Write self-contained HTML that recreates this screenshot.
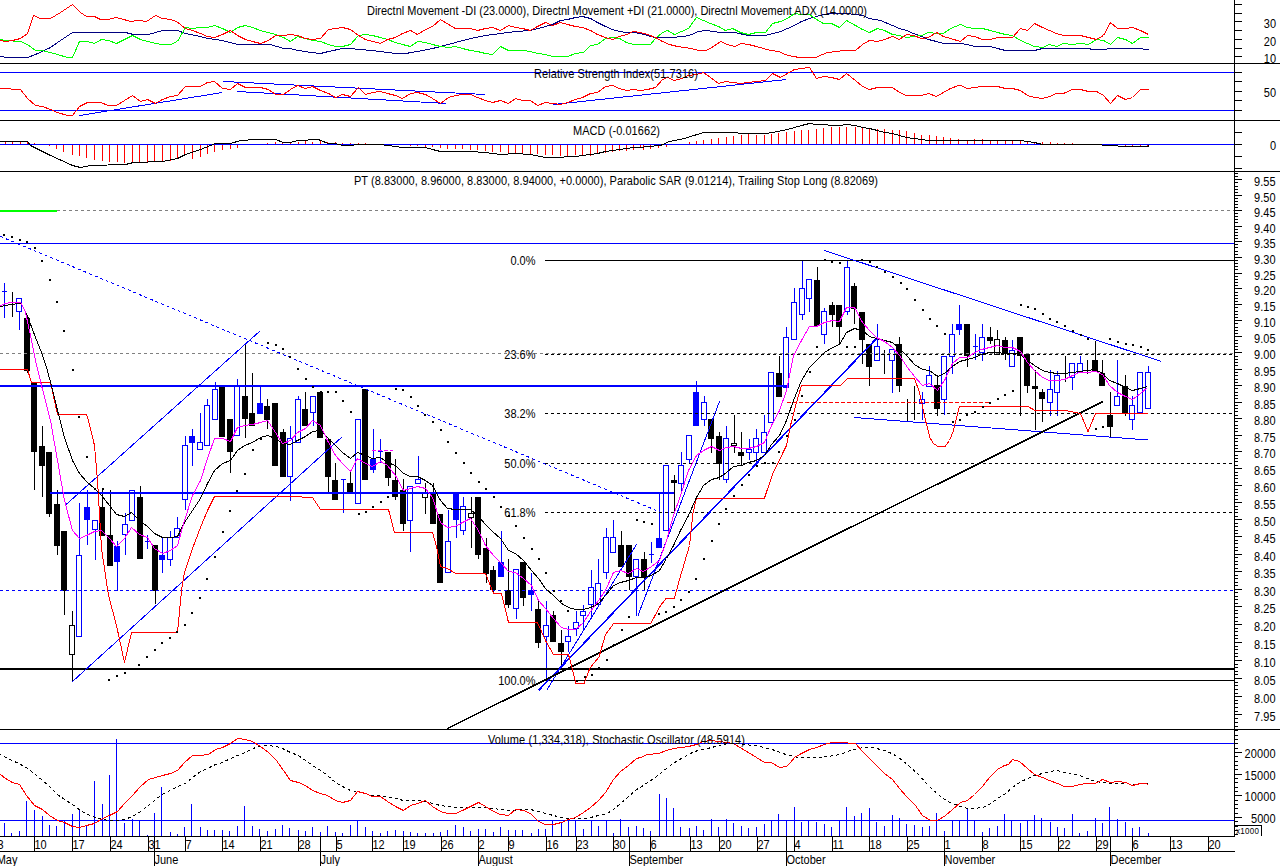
<!DOCTYPE html>
<html><head><meta charset="utf-8"><title>PT chart</title>
<style>
html,body{margin:0;padding:0;background:#fff;overflow:hidden}
svg{display:block}
text{font-family:"Liberation Sans",sans-serif;fill:#000}
</style></head><body>
<svg width="1280" height="866" viewBox="0 0 1280 866" shape-rendering="crispEdges" text-rendering="optimizeSpeed">
<rect width="1280" height="866" fill="#fff"/>
<rect x="0" y="63" width="1280" height="1" fill="#000"/>
<rect x="0" y="120" width="1280" height="1" fill="#000"/>
<rect x="0" y="171" width="1280" height="1" fill="#000"/>
<rect x="0" y="729" width="1280" height="1" fill="#000"/>
<rect x="0" y="836" width="1234" height="1" fill="#000"/>
<rect x="0" y="851" width="1235" height="1" fill="#000"/>
<rect x="1234" y="0" width="1" height="837" fill="#000"/>
<polyline points="-1.5,56.5 0.5,56.5 7.5,57.5 27.5,57.5 35.5,54.5 50.5,47.5 60.5,40.5 72.5,32.5 125.5,32.5 133.5,34.5 148.5,34.5 162.5,30.5 177.5,30.5 185.5,33.5 200.5,36.5 207.5,38.5 215.5,39.5 222.5,40.5 237.5,44.5 270.5,44.5 283.5,48.5 290.5,48.5 297.5,50.5 305.5,51.5 310.5,52.5 320.5,53.5 328.5,51.5 342.5,48.5 350.5,48.5 358.5,49.5 372.5,50.5 387.5,52.5 395.5,53.5 405.5,53.5 417.5,51.5 432.5,48.5 440.5,46.5 455.5,42.5 470.5,38.5 485.5,35.5 500.5,33.5 515.5,31.5 530.5,30.5 545.5,26.5 552.5,24.5 560.5,20.5 567.5,19.5 575.5,17.5 582.5,16.5 590.5,18.5 597.5,22.5 605.5,26.5 612.5,29.5 619.5,31.5 626.5,32.5 633.5,32.5 640.5,33.5 647.5,35.5 655.5,37.5 670.5,37.5 684.5,36.5 691.5,34.5 698.5,31.5 706.5,30.5 713.5,31.5 720.5,32.5 734.5,32.5 748.5,35.5 765.5,35.5 780.5,31.5 794.5,25.5 801.5,21.5 809.5,18.5 816.5,16.5 823.5,14.5 831.5,13.5 839.5,13.5 846.5,13.5 862.5,15.5 869.5,18.5 880.5,20.5 892.5,25.5 899.5,28.5 906.5,30.5 913.5,33.5 921.5,36.5 928.5,39.5 936.5,41.5 943.5,43.5 950.5,43.5 960.5,43.5 967.5,44.5 974.5,46.5 990.5,46.5 997.5,48.5 1005.5,50.5 1034.5,50.5 1042.5,48.5 1088.5,48.5 1092.5,49.5 1103.5,49.5 1110.5,48.5 1140.5,48.5 1145.5,49.5 1148.5,49.5" fill="none" stroke="#000080" stroke-width="1"/>
<polyline points="-1.5,39.5 0.5,39.5 5.5,40.5 20.5,41.5 27.5,44.5 35.5,50.5 42.5,50.5 57.5,54.5 67.5,57.5 72.5,57.5 79.5,41.5 87.5,41.5 94.5,43.5 101.5,39.5 108.5,40.5 116.5,43.5 124.5,39.5 132.5,35.5 140.5,39.5 155.5,43.5 162.5,44.5 170.5,44.5 177.5,41.5 185.5,27.5 192.5,28.5 200.5,27.5 207.5,27.5 214.5,25.5 222.5,28.5 230.5,32.5 237.5,27.5 245.5,25.5 252.5,27.5 260.5,30.5 275.5,34.5 283.5,37.5 290.5,41.5 297.5,36.5 305.5,38.5 312.5,40.5 320.5,41.5 328.5,44.5 335.5,46.5 342.5,46.5 350.5,44.5 358.5,35.5 365.5,34.5 372.5,35.5 380.5,37.5 387.5,39.5 395.5,42.5 402.5,44.5 410.5,46.5 417.5,41.5 425.5,42.5 432.5,44.5 440.5,46.5 448.5,47.5 455.5,46.5 462.5,48.5 470.5,50.5 477.5,51.5 485.5,53.5 492.5,54.5 500.5,46.5 508.5,50.5 515.5,50.5 522.5,50.5 530.5,51.5 537.5,53.5 545.5,54.5 552.5,56.5 567.5,56.5 575.5,53.5 583.5,52.5 590.5,45.5 597.5,44.5 605.5,38.5 612.5,37.5 619.5,38.5 626.5,42.5 633.5,44.5 640.5,44.5 650.5,44.5 655.5,38.5 662.5,32.5 667.5,30.5 674.5,34.5 681.5,31.5 688.5,28.5 696.5,17.5 703.5,20.5 710.5,23.5 718.5,26.5 725.5,30.5 732.5,28.5 740.5,32.5 748.5,34.5 756.5,32.5 765.5,32.5 772.5,23.5 780.5,21.5 787.5,18.5 794.5,13.5 801.5,14.5 809.5,14.5 816.5,19.5 823.5,23.5 831.5,23.5 839.5,27.5 846.5,20.5 855.5,25.5 862.5,29.5 869.5,32.5 877.5,28.5 884.5,30.5 892.5,34.5 899.5,35.5 906.5,37.5 913.5,36.5 921.5,35.5 928.5,32.5 936.5,33.5 943.5,33.5 950.5,28.5 960.5,24.5 967.5,27.5 974.5,28.5 982.5,28.5 990.5,30.5 997.5,32.5 1005.5,34.5 1012.5,35.5 1020.5,40.5 1027.5,43.5 1034.5,46.5 1042.5,47.5 1049.5,44.5 1056.5,46.5 1063.5,43.5 1072.5,44.5 1080.5,43.5 1088.5,44.5 1096.5,39.5 1103.5,40.5 1110.5,44.5 1117.5,37.5 1125.5,39.5 1132.5,43.5 1140.5,37.5 1148.5,37.5" fill="none" stroke="#00ff00" stroke-width="1"/>
<polyline points="-1.5,40.5 0.5,40.5 5.5,41.5 12.5,40.5 20.5,38.5 27.5,33.5 33.5,15.5 40.5,18.5 50.5,18.5 60.5,12.5 72.5,4.5 80.5,12.5 86.5,16.5 94.5,16.5 100.5,19.5 108.5,19.5 115.5,17.5 120.5,18.5 130.5,21.5 138.5,20.5 146.5,21.5 155.5,15.5 162.5,18.5 170.5,19.5 176.5,21.5 185.5,28.5 192.5,30.5 200.5,33.5 207.5,36.5 214.5,37.5 222.5,34.5 230.5,30.5 237.5,35.5 245.5,39.5 252.5,41.5 260.5,43.5 268.5,40.5 275.5,35.5 283.5,35.5 290.5,34.5 297.5,35.5 305.5,38.5 312.5,39.5 320.5,38.5 328.5,29.5 342.5,27.5 350.5,29.5 358.5,35.5 365.5,39.5 380.5,43.5 387.5,39.5 395.5,37.5 402.5,33.5 410.5,30.5 417.5,34.5 425.5,29.5 432.5,26.5 440.5,19.5 448.5,24.5 455.5,28.5 462.5,28.5 470.5,28.5 477.5,30.5 485.5,28.5 492.5,27.5 500.5,30.5 508.5,25.5 515.5,27.5 522.5,28.5 530.5,30.5 537.5,26.5 545.5,22.5 552.5,25.5 560.5,22.5 567.5,24.5 575.5,26.5 582.5,27.5 590.5,30.5 597.5,34.5 605.5,37.5 612.5,39.5 619.5,36.5 626.5,34.5 633.5,31.5 640.5,32.5 647.5,34.5 655.5,37.5 662.5,41.5 669.5,44.5 677.5,46.5 684.5,47.5 691.5,48.5 698.5,50.5 706.5,50.5 713.5,46.5 720.5,41.5 727.5,44.5 734.5,46.5 741.5,43.5 748.5,44.5 756.5,46.5 763.5,48.5 770.5,50.5 778.5,51.5 785.5,54.5 792.5,56.5 800.5,57.5 815.5,57.5 822.5,54.5 827.5,52.5 836.5,51.5 843.5,50.5 855.5,50.5 862.5,44.5 869.5,40.5 877.5,41.5 884.5,39.5 892.5,36.5 899.5,39.5 906.5,34.5 913.5,35.5 921.5,38.5 928.5,37.5 936.5,32.5 943.5,36.5 950.5,38.5 960.5,41.5 967.5,35.5 974.5,36.5 982.5,39.5 990.5,39.5 997.5,37.5 1012.5,37.5 1020.5,28.5 1027.5,30.5 1034.5,23.5 1042.5,27.5 1049.5,30.5 1056.5,33.5 1063.5,35.5 1080.5,35.5 1088.5,37.5 1096.5,39.5 1103.5,35.5 1110.5,22.5 1117.5,28.5 1125.5,28.5 1132.5,27.5 1140.5,30.5 1148.5,34.5" fill="none" stroke="#ff0000" stroke-width="1"/>
<rect x="1234" y="4" width="8" height="1" fill="#000"/>
<rect x="1234" y="13" width="8" height="1" fill="#000"/>
<rect x="1234" y="21" width="8" height="1" fill="#000"/>
<rect x="1234" y="30" width="8" height="1" fill="#000"/>
<rect x="1234" y="39" width="8" height="1" fill="#000"/>
<rect x="1234" y="48" width="8" height="1" fill="#000"/>
<rect x="1234" y="56" width="8" height="1" fill="#000"/>
<text transform="translate(1276 27.5) scale(1 1.09)" text-anchor="end" font-size="11">30</text>
<text transform="translate(1276 45.5) scale(1 1.09)" text-anchor="end" font-size="11">20</text>
<text transform="translate(1276 62.5) scale(1 1.09)" text-anchor="end" font-size="11">10</text>
<rect x="0" y="72" width="1234" height="1" fill="#0000ff"/>
<rect x="0" y="110" width="1234" height="1" fill="#0000ff"/>
<line x1="79.5" y1="115.5" x2="222.5" y2="92.5" stroke="#0000ff" stroke-width="1"/>
<line x1="223.5" y1="81.5" x2="485.5" y2="94.5" stroke="#0000ff" stroke-width="1"/>
<line x1="237.5" y1="91.5" x2="446.5" y2="103.5" stroke="#0000ff" stroke-width="1"/>
<line x1="553.5" y1="104.5" x2="786.5" y2="79.5" stroke="#0000ff" stroke-width="1"/>
<polyline points="-1.5,88.5 0.5,88.5 20.5,89.5 27.5,98.5 35.5,105.5 42.5,106.5 50.5,109.5 57.5,112.5 67.5,115.5 72.5,115.5 79.5,106.5 87.5,102.5 100.5,102.5 108.5,105.5 116.5,105.5 124.5,100.5 132.5,95.5 140.5,101.5 147.5,99.5 155.5,103.5 162.5,99.5 170.5,96.5 177.5,95.5 185.5,86.5 200.5,86.5 207.5,82.5 214.5,81.5 222.5,88.5 230.5,89.5 237.5,83.5 245.5,87.5 260.5,87.5 268.5,89.5 275.5,94.5 283.5,94.5 290.5,89.5 297.5,85.5 305.5,88.5 312.5,86.5 320.5,90.5 328.5,93.5 335.5,97.5 342.5,94.5 350.5,96.5 358.5,87.5 365.5,94.5 372.5,92.5 380.5,91.5 387.5,93.5 395.5,95.5 402.5,98.5 410.5,93.5 417.5,92.5 425.5,94.5 432.5,98.5 440.5,103.5 448.5,97.5 455.5,95.5 462.5,94.5 470.5,94.5 477.5,97.5 485.5,100.5 492.5,102.5 500.5,100.5 508.5,103.5 515.5,98.5 522.5,100.5 530.5,100.5 537.5,105.5 545.5,102.5 552.5,103.5 560.5,104.5 567.5,102.5 575.5,99.5 582.5,97.5 590.5,93.5 597.5,92.5 605.5,86.5 612.5,85.5 619.5,88.5 626.5,90.5 633.5,89.5 640.5,90.5 647.5,89.5 655.5,87.5 662.5,79.5 667.5,77.5 674.5,80.5 681.5,78.5 688.5,75.5 696.5,74.5 703.5,72.5 710.5,77.5 718.5,83.5 725.5,81.5 732.5,82.5 740.5,83.5 748.5,82.5 756.5,81.5 765.5,80.5 772.5,73.5 780.5,77.5 787.5,73.5 794.5,69.5 801.5,68.5 809.5,67.5 816.5,78.5 823.5,76.5 831.5,77.5 839.5,79.5 846.5,73.5 855.5,80.5 862.5,86.5 869.5,89.5 877.5,87.5 892.5,87.5 899.5,92.5 906.5,95.5 921.5,95.5 928.5,93.5 936.5,96.5 943.5,92.5 950.5,88.5 958.5,85.5 960.5,85.5 967.5,88.5 974.5,87.5 982.5,86.5 997.5,86.5 1005.5,88.5 1012.5,88.5 1020.5,90.5 1027.5,95.5 1034.5,97.5 1042.5,98.5 1049.5,96.5 1056.5,93.5 1063.5,93.5 1072.5,89.5 1080.5,89.5 1088.5,91.5 1096.5,91.5 1103.5,95.5 1110.5,103.5 1117.5,95.5 1125.5,99.5 1132.5,97.5 1140.5,89.5 1148.5,89.5" fill="none" stroke="#ff0000" stroke-width="1"/>
<rect x="1234" y="72" width="8" height="1" fill="#000"/>
<rect x="1234" y="81" width="8" height="1" fill="#000"/>
<rect x="1234" y="91" width="8" height="1" fill="#000"/>
<rect x="1234" y="100" width="8" height="1" fill="#000"/>
<rect x="1234" y="110" width="8" height="1" fill="#000"/>
<text transform="translate(1276 97) scale(1 1.09)" text-anchor="end" font-size="11">50</text>
<rect x="5" y="141" width="1" height="3" fill="#ff0000"/>
<rect x="12" y="141" width="1" height="3" fill="#ff0000"/>
<rect x="20" y="142" width="1" height="2" fill="#ff0000"/>
<rect x="27" y="142" width="1" height="2" fill="#ff0000"/>
<rect x="34" y="143" width="1" height="1" fill="#ff0000"/>
<rect x="49" y="145" width="1" height="1" fill="#ff0000"/>
<rect x="56" y="145" width="1" height="4" fill="#ff0000"/>
<rect x="63" y="145" width="1" height="7" fill="#ff0000"/>
<rect x="72" y="145" width="1" height="10" fill="#ff0000"/>
<rect x="79" y="145" width="1" height="11" fill="#ff0000"/>
<rect x="86" y="145" width="1" height="13" fill="#ff0000"/>
<rect x="94" y="145" width="1" height="15" fill="#ff0000"/>
<rect x="102" y="145" width="1" height="16" fill="#ff0000"/>
<rect x="109" y="145" width="1" height="17" fill="#ff0000"/>
<rect x="117" y="145" width="1" height="17" fill="#ff0000"/>
<rect x="124" y="145" width="1" height="18" fill="#ff0000"/>
<rect x="132" y="145" width="1" height="18" fill="#ff0000"/>
<rect x="139" y="145" width="1" height="17" fill="#ff0000"/>
<rect x="147" y="145" width="1" height="17" fill="#ff0000"/>
<rect x="154" y="145" width="1" height="17" fill="#ff0000"/>
<rect x="162" y="145" width="1" height="16" fill="#ff0000"/>
<rect x="170" y="145" width="1" height="16" fill="#ff0000"/>
<rect x="177" y="145" width="1" height="14" fill="#ff0000"/>
<rect x="184" y="145" width="1" height="11" fill="#ff0000"/>
<rect x="192" y="145" width="1" height="14" fill="#ff0000"/>
<rect x="200" y="145" width="1" height="12" fill="#ff0000"/>
<rect x="207" y="145" width="1" height="9" fill="#ff0000"/>
<rect x="214" y="145" width="1" height="7" fill="#ff0000"/>
<rect x="222" y="145" width="1" height="5" fill="#ff0000"/>
<rect x="230" y="145" width="1" height="4" fill="#ff0000"/>
<rect x="237" y="145" width="1" height="3" fill="#ff0000"/>
<rect x="267" y="143" width="1" height="1" fill="#ff0000"/>
<rect x="275" y="142" width="1" height="2" fill="#ff0000"/>
<rect x="282" y="143" width="1" height="1" fill="#ff0000"/>
<rect x="290" y="142" width="1" height="2" fill="#ff0000"/>
<rect x="298" y="142" width="1" height="2" fill="#ff0000"/>
<rect x="305" y="141" width="1" height="3" fill="#ff0000"/>
<rect x="312" y="142" width="1" height="2" fill="#ff0000"/>
<rect x="320" y="141" width="1" height="3" fill="#ff0000"/>
<rect x="327" y="142" width="1" height="2" fill="#ff0000"/>
<rect x="335" y="142" width="1" height="2" fill="#ff0000"/>
<rect x="342" y="143" width="1" height="1" fill="#ff0000"/>
<rect x="350" y="143" width="1" height="1" fill="#ff0000"/>
<rect x="358" y="143" width="1" height="1" fill="#ff0000"/>
<rect x="365" y="143" width="1" height="1" fill="#ff0000"/>
<rect x="410" y="145" width="1" height="1" fill="#ff0000"/>
<rect x="417" y="145" width="1" height="1" fill="#ff0000"/>
<rect x="425" y="145" width="1" height="2" fill="#ff0000"/>
<rect x="432" y="145" width="1" height="2" fill="#ff0000"/>
<rect x="440" y="145" width="1" height="3" fill="#ff0000"/>
<rect x="447" y="145" width="1" height="4" fill="#ff0000"/>
<rect x="455" y="145" width="1" height="4" fill="#ff0000"/>
<rect x="462" y="145" width="1" height="4" fill="#ff0000"/>
<rect x="470" y="145" width="1" height="5" fill="#ff0000"/>
<rect x="477" y="145" width="1" height="5" fill="#ff0000"/>
<rect x="485" y="145" width="1" height="6" fill="#ff0000"/>
<rect x="492" y="145" width="1" height="7" fill="#ff0000"/>
<rect x="500" y="145" width="1" height="7" fill="#ff0000"/>
<rect x="508" y="145" width="1" height="8" fill="#ff0000"/>
<rect x="515" y="145" width="1" height="8" fill="#ff0000"/>
<rect x="522" y="145" width="1" height="8" fill="#ff0000"/>
<rect x="530" y="145" width="1" height="9" fill="#ff0000"/>
<rect x="537" y="145" width="1" height="9" fill="#ff0000"/>
<rect x="545" y="145" width="1" height="10" fill="#ff0000"/>
<rect x="552" y="145" width="1" height="10" fill="#ff0000"/>
<rect x="560" y="145" width="1" height="11" fill="#ff0000"/>
<rect x="567" y="145" width="1" height="11" fill="#ff0000"/>
<rect x="575" y="145" width="1" height="10" fill="#ff0000"/>
<rect x="582" y="145" width="1" height="10" fill="#ff0000"/>
<rect x="590" y="145" width="1" height="11" fill="#ff0000"/>
<rect x="597" y="145" width="1" height="9" fill="#ff0000"/>
<rect x="605" y="145" width="1" height="8" fill="#ff0000"/>
<rect x="612" y="145" width="1" height="7" fill="#ff0000"/>
<rect x="619" y="145" width="1" height="6" fill="#ff0000"/>
<rect x="626" y="145" width="1" height="6" fill="#ff0000"/>
<rect x="633" y="145" width="1" height="5" fill="#ff0000"/>
<rect x="640" y="145" width="1" height="3" fill="#ff0000"/>
<rect x="643" y="145" width="1" height="5" fill="#ff0000"/>
<rect x="650" y="145" width="1" height="4" fill="#ff0000"/>
<rect x="658" y="145" width="1" height="3" fill="#ff0000"/>
<rect x="666" y="145" width="1" height="2" fill="#ff0000"/>
<rect x="689" y="142" width="1" height="2" fill="#ff0000"/>
<rect x="696" y="141" width="1" height="3" fill="#ff0000"/>
<rect x="703" y="140" width="1" height="4" fill="#ff0000"/>
<rect x="711" y="139" width="1" height="5" fill="#ff0000"/>
<rect x="718" y="138" width="1" height="6" fill="#ff0000"/>
<rect x="726" y="137" width="1" height="7" fill="#ff0000"/>
<rect x="733" y="136" width="1" height="8" fill="#ff0000"/>
<rect x="741" y="135" width="1" height="9" fill="#ff0000"/>
<rect x="748" y="134" width="1" height="10" fill="#ff0000"/>
<rect x="756" y="135" width="1" height="9" fill="#ff0000"/>
<rect x="764" y="135" width="1" height="9" fill="#ff0000"/>
<rect x="771" y="134" width="1" height="10" fill="#ff0000"/>
<rect x="778" y="133" width="1" height="11" fill="#ff0000"/>
<rect x="786" y="132" width="1" height="12" fill="#ff0000"/>
<rect x="794" y="131" width="1" height="13" fill="#ff0000"/>
<rect x="801" y="130" width="1" height="14" fill="#ff0000"/>
<rect x="808" y="130" width="1" height="14" fill="#ff0000"/>
<rect x="816" y="129" width="1" height="15" fill="#ff0000"/>
<rect x="823" y="128" width="1" height="16" fill="#ff0000"/>
<rect x="831" y="127" width="1" height="17" fill="#ff0000"/>
<rect x="839" y="127" width="1" height="17" fill="#ff0000"/>
<rect x="846" y="127" width="1" height="17" fill="#ff0000"/>
<rect x="855" y="127" width="1" height="17" fill="#ff0000"/>
<rect x="862" y="128" width="1" height="16" fill="#ff0000"/>
<rect x="869" y="128" width="1" height="16" fill="#ff0000"/>
<rect x="877" y="129" width="1" height="15" fill="#ff0000"/>
<rect x="884" y="129" width="1" height="15" fill="#ff0000"/>
<rect x="892" y="130" width="1" height="14" fill="#ff0000"/>
<rect x="899" y="130" width="1" height="14" fill="#ff0000"/>
<rect x="906" y="131" width="1" height="13" fill="#ff0000"/>
<rect x="914" y="133" width="1" height="11" fill="#ff0000"/>
<rect x="921" y="135" width="1" height="9" fill="#ff0000"/>
<rect x="929" y="135" width="1" height="9" fill="#ff0000"/>
<rect x="936" y="136" width="1" height="8" fill="#ff0000"/>
<rect x="943" y="137" width="1" height="7" fill="#ff0000"/>
<rect x="950" y="138" width="1" height="6" fill="#ff0000"/>
<rect x="958" y="139" width="1" height="5" fill="#ff0000"/>
<rect x="967" y="140" width="1" height="4" fill="#ff0000"/>
<rect x="974" y="139" width="1" height="5" fill="#ff0000"/>
<rect x="982" y="139" width="1" height="5" fill="#ff0000"/>
<rect x="990" y="140" width="1" height="4" fill="#ff0000"/>
<rect x="997" y="140" width="1" height="4" fill="#ff0000"/>
<rect x="1005" y="140" width="1" height="4" fill="#ff0000"/>
<rect x="1012" y="140" width="1" height="4" fill="#ff0000"/>
<rect x="1020" y="140" width="1" height="4" fill="#ff0000"/>
<rect x="1027" y="141" width="1" height="3" fill="#ff0000"/>
<rect x="1034" y="142" width="1" height="2" fill="#ff0000"/>
<rect x="1042" y="142" width="1" height="2" fill="#ff0000"/>
<rect x="1050" y="142" width="1" height="2" fill="#ff0000"/>
<rect x="1057" y="143" width="1" height="1" fill="#ff0000"/>
<rect x="1064" y="143" width="1" height="1" fill="#ff0000"/>
<rect x="1072" y="143" width="1" height="1" fill="#ff0000"/>
<rect x="1125" y="145" width="1" height="1" fill="#ff0000"/>
<rect x="1132" y="145" width="1" height="1" fill="#ff0000"/>
<rect x="1140" y="145" width="1" height="1" fill="#ff0000"/>
<rect x="1147" y="145" width="1" height="1" fill="#ff0000"/>
<rect x="0" y="144" width="1234" height="1" fill="#0000ff"/>
<polyline points="-1.5,141.5 0.5,141.5 27.5,141.5 30.5,145.5 50.5,155.5 72.5,165.5 80.5,167.5 90.5,165.5 125.5,164.5 133.5,162.5 162.5,161.5 177.5,158.5 185.5,154.5 200.5,149.5 215.5,143.5 230.5,143.5 240.5,140.5 255.5,139.5 275.5,139.5 283.5,142.5 290.5,142.5 297.5,140.5 305.5,140.5 310.5,139.5 318.5,139.5 320.5,140.5 328.5,143.5 335.5,143.5 342.5,145.5 350.5,145.5 358.5,144.5 380.5,144.5 395.5,146.5 402.5,147.5 425.5,147.5 432.5,149.5 440.5,151.5 470.5,151.5 485.5,152.5 500.5,154.5 515.5,153.5 530.5,154.5 545.5,157.5 552.5,157.5 560.5,157.5 567.5,156.5 575.5,156.5 582.5,155.5 590.5,154.5 597.5,153.5 605.5,151.5 612.5,150.5 619.5,149.5 626.5,148.5 633.5,147.5 640.5,147.5 647.5,146.5 660.5,145.5 662.5,144.5 669.5,141.5 684.5,138.5 703.5,132.5 735.5,132.5 740.5,133.5 765.5,133.5 772.5,132.5 787.5,129.5 801.5,125.5 809.5,123.5 816.5,124.5 839.5,125.5 846.5,124.5 855.5,125.5 862.5,127.5 869.5,128.5 877.5,130.5 884.5,132.5 892.5,133.5 899.5,135.5 906.5,137.5 913.5,138.5 921.5,139.5 928.5,140.5 936.5,140.5 943.5,140.5 950.5,140.5 960.5,140.5 967.5,140.5 1020.5,140.5 1027.5,141.5 1034.5,142.5 1042.5,144.5 1100.5,144.5 1103.5,145.5 1117.5,145.5 1118.5,146.5 1148.5,146.5 1148.5,144.5" fill="none" stroke="#000" stroke-width="1"/>
<rect x="1234" y="132" width="8" height="1" fill="#000"/>
<rect x="1234" y="144" width="8" height="1" fill="#000"/>
<rect x="1234" y="156" width="8" height="1" fill="#000"/>
<rect x="1234" y="168" width="8" height="1" fill="#000"/>
<text transform="translate(1276 150) scale(1 1.09)" text-anchor="end" font-size="11">0</text>
<rect x="1234" y="726" width="4" height="1" fill="#000"/>
<rect x="1234" y="722" width="4" height="1" fill="#000"/>
<rect x="1234" y="718" width="4" height="1" fill="#000"/>
<rect x="1234" y="714" width="8" height="1" fill="#000"/>
<text transform="translate(1275.5 721) scale(1 1.09)" text-anchor="end" font-size="11">7.95</text>
<rect x="1234" y="711" width="4" height="1" fill="#000"/>
<rect x="1234" y="707" width="4" height="1" fill="#000"/>
<rect x="1234" y="703" width="4" height="1" fill="#000"/>
<rect x="1234" y="700" width="4" height="1" fill="#000"/>
<rect x="1234" y="696" width="8" height="1" fill="#000"/>
<text transform="translate(1275.5 703) scale(1 1.09)" text-anchor="end" font-size="11">8.00</text>
<rect x="1234" y="693" width="4" height="1" fill="#000"/>
<rect x="1234" y="689" width="4" height="1" fill="#000"/>
<rect x="1234" y="685" width="4" height="1" fill="#000"/>
<rect x="1234" y="682" width="4" height="1" fill="#000"/>
<rect x="1234" y="678" width="8" height="1" fill="#000"/>
<text transform="translate(1275.5 685) scale(1 1.09)" text-anchor="end" font-size="11">8.05</text>
<rect x="1234" y="674" width="4" height="1" fill="#000"/>
<rect x="1234" y="671" width="4" height="1" fill="#000"/>
<rect x="1234" y="667" width="4" height="1" fill="#000"/>
<rect x="1234" y="664" width="4" height="1" fill="#000"/>
<rect x="1234" y="660" width="8" height="1" fill="#000"/>
<text transform="translate(1275.5 667) scale(1 1.09)" text-anchor="end" font-size="11">8.10</text>
<rect x="1234" y="656" width="4" height="1" fill="#000"/>
<rect x="1234" y="653" width="4" height="1" fill="#000"/>
<rect x="1234" y="649" width="4" height="1" fill="#000"/>
<rect x="1234" y="646" width="4" height="1" fill="#000"/>
<rect x="1234" y="642" width="8" height="1" fill="#000"/>
<text transform="translate(1275.5 649) scale(1 1.09)" text-anchor="end" font-size="11">8.15</text>
<rect x="1234" y="638" width="4" height="1" fill="#000"/>
<rect x="1234" y="635" width="4" height="1" fill="#000"/>
<rect x="1234" y="631" width="4" height="1" fill="#000"/>
<rect x="1234" y="628" width="4" height="1" fill="#000"/>
<rect x="1234" y="624" width="8" height="1" fill="#000"/>
<text transform="translate(1275.5 631) scale(1 1.09)" text-anchor="end" font-size="11">8.20</text>
<rect x="1234" y="621" width="4" height="1" fill="#000"/>
<rect x="1234" y="617" width="4" height="1" fill="#000"/>
<rect x="1234" y="613" width="4" height="1" fill="#000"/>
<rect x="1234" y="610" width="4" height="1" fill="#000"/>
<rect x="1234" y="606" width="8" height="1" fill="#000"/>
<text transform="translate(1275.5 613) scale(1 1.09)" text-anchor="end" font-size="11">8.25</text>
<rect x="1234" y="603" width="4" height="1" fill="#000"/>
<rect x="1234" y="599" width="4" height="1" fill="#000"/>
<rect x="1234" y="596" width="4" height="1" fill="#000"/>
<rect x="1234" y="592" width="4" height="1" fill="#000"/>
<rect x="1234" y="589" width="8" height="1" fill="#000"/>
<text transform="translate(1275.5 596) scale(1 1.09)" text-anchor="end" font-size="11">8.30</text>
<rect x="1234" y="585" width="4" height="1" fill="#000"/>
<rect x="1234" y="582" width="4" height="1" fill="#000"/>
<rect x="1234" y="578" width="4" height="1" fill="#000"/>
<rect x="1234" y="575" width="4" height="1" fill="#000"/>
<rect x="1234" y="571" width="8" height="1" fill="#000"/>
<text transform="translate(1275.5 578) scale(1 1.09)" text-anchor="end" font-size="11">8.35</text>
<rect x="1234" y="568" width="4" height="1" fill="#000"/>
<rect x="1234" y="564" width="4" height="1" fill="#000"/>
<rect x="1234" y="561" width="4" height="1" fill="#000"/>
<rect x="1234" y="557" width="4" height="1" fill="#000"/>
<rect x="1234" y="554" width="8" height="1" fill="#000"/>
<text transform="translate(1275.5 561) scale(1 1.09)" text-anchor="end" font-size="11">8.40</text>
<rect x="1234" y="550" width="4" height="1" fill="#000"/>
<rect x="1234" y="547" width="4" height="1" fill="#000"/>
<rect x="1234" y="543" width="4" height="1" fill="#000"/>
<rect x="1234" y="540" width="4" height="1" fill="#000"/>
<rect x="1234" y="536" width="8" height="1" fill="#000"/>
<text transform="translate(1275.5 543) scale(1 1.09)" text-anchor="end" font-size="11">8.45</text>
<rect x="1234" y="533" width="4" height="1" fill="#000"/>
<rect x="1234" y="530" width="4" height="1" fill="#000"/>
<rect x="1234" y="526" width="4" height="1" fill="#000"/>
<rect x="1234" y="523" width="4" height="1" fill="#000"/>
<rect x="1234" y="519" width="8" height="1" fill="#000"/>
<text transform="translate(1275.5 526) scale(1 1.09)" text-anchor="end" font-size="11">8.50</text>
<rect x="1234" y="516" width="4" height="1" fill="#000"/>
<rect x="1234" y="512" width="4" height="1" fill="#000"/>
<rect x="1234" y="509" width="4" height="1" fill="#000"/>
<rect x="1234" y="506" width="4" height="1" fill="#000"/>
<rect x="1234" y="502" width="8" height="1" fill="#000"/>
<text transform="translate(1275.5 509) scale(1 1.09)" text-anchor="end" font-size="11">8.55</text>
<rect x="1234" y="499" width="4" height="1" fill="#000"/>
<rect x="1234" y="495" width="4" height="1" fill="#000"/>
<rect x="1234" y="492" width="4" height="1" fill="#000"/>
<rect x="1234" y="489" width="4" height="1" fill="#000"/>
<rect x="1234" y="485" width="8" height="1" fill="#000"/>
<text transform="translate(1275.5 492) scale(1 1.09)" text-anchor="end" font-size="11">8.60</text>
<rect x="1234" y="482" width="4" height="1" fill="#000"/>
<rect x="1234" y="478" width="4" height="1" fill="#000"/>
<rect x="1234" y="475" width="4" height="1" fill="#000"/>
<rect x="1234" y="472" width="4" height="1" fill="#000"/>
<rect x="1234" y="468" width="8" height="1" fill="#000"/>
<text transform="translate(1275.5 475) scale(1 1.09)" text-anchor="end" font-size="11">8.65</text>
<rect x="1234" y="465" width="4" height="1" fill="#000"/>
<rect x="1234" y="461" width="4" height="1" fill="#000"/>
<rect x="1234" y="458" width="4" height="1" fill="#000"/>
<rect x="1234" y="455" width="4" height="1" fill="#000"/>
<rect x="1234" y="451" width="8" height="1" fill="#000"/>
<text transform="translate(1275.5 458) scale(1 1.09)" text-anchor="end" font-size="11">8.70</text>
<rect x="1234" y="448" width="4" height="1" fill="#000"/>
<rect x="1234" y="445" width="4" height="1" fill="#000"/>
<rect x="1234" y="441" width="4" height="1" fill="#000"/>
<rect x="1234" y="438" width="4" height="1" fill="#000"/>
<rect x="1234" y="435" width="8" height="1" fill="#000"/>
<text transform="translate(1275.5 442) scale(1 1.09)" text-anchor="end" font-size="11">8.75</text>
<rect x="1234" y="431" width="4" height="1" fill="#000"/>
<rect x="1234" y="428" width="4" height="1" fill="#000"/>
<rect x="1234" y="425" width="4" height="1" fill="#000"/>
<rect x="1234" y="421" width="4" height="1" fill="#000"/>
<rect x="1234" y="418" width="8" height="1" fill="#000"/>
<text transform="translate(1275.5 425) scale(1 1.09)" text-anchor="end" font-size="11">8.80</text>
<rect x="1234" y="415" width="4" height="1" fill="#000"/>
<rect x="1234" y="411" width="4" height="1" fill="#000"/>
<rect x="1234" y="408" width="4" height="1" fill="#000"/>
<rect x="1234" y="405" width="4" height="1" fill="#000"/>
<rect x="1234" y="402" width="8" height="1" fill="#000"/>
<text transform="translate(1275.5 409) scale(1 1.09)" text-anchor="end" font-size="11">8.85</text>
<rect x="1234" y="398" width="4" height="1" fill="#000"/>
<rect x="1234" y="395" width="4" height="1" fill="#000"/>
<rect x="1234" y="392" width="4" height="1" fill="#000"/>
<rect x="1234" y="388" width="4" height="1" fill="#000"/>
<rect x="1234" y="385" width="8" height="1" fill="#000"/>
<text transform="translate(1275.5 392) scale(1 1.09)" text-anchor="end" font-size="11">8.90</text>
<rect x="1234" y="382" width="4" height="1" fill="#000"/>
<rect x="1234" y="379" width="4" height="1" fill="#000"/>
<rect x="1234" y="375" width="4" height="1" fill="#000"/>
<rect x="1234" y="372" width="4" height="1" fill="#000"/>
<rect x="1234" y="369" width="8" height="1" fill="#000"/>
<text transform="translate(1275.5 376) scale(1 1.09)" text-anchor="end" font-size="11">8.95</text>
<rect x="1234" y="365" width="4" height="1" fill="#000"/>
<rect x="1234" y="362" width="4" height="1" fill="#000"/>
<rect x="1234" y="359" width="4" height="1" fill="#000"/>
<rect x="1234" y="356" width="4" height="1" fill="#000"/>
<rect x="1234" y="352" width="8" height="1" fill="#000"/>
<text transform="translate(1275.5 359) scale(1 1.09)" text-anchor="end" font-size="11">9.00</text>
<rect x="1234" y="349" width="4" height="1" fill="#000"/>
<rect x="1234" y="346" width="4" height="1" fill="#000"/>
<rect x="1234" y="343" width="4" height="1" fill="#000"/>
<rect x="1234" y="340" width="4" height="1" fill="#000"/>
<rect x="1234" y="336" width="8" height="1" fill="#000"/>
<text transform="translate(1275.5 343) scale(1 1.09)" text-anchor="end" font-size="11">9.05</text>
<rect x="1234" y="333" width="4" height="1" fill="#000"/>
<rect x="1234" y="330" width="4" height="1" fill="#000"/>
<rect x="1234" y="327" width="4" height="1" fill="#000"/>
<rect x="1234" y="323" width="4" height="1" fill="#000"/>
<rect x="1234" y="320" width="8" height="1" fill="#000"/>
<text transform="translate(1275.5 327) scale(1 1.09)" text-anchor="end" font-size="11">9.10</text>
<rect x="1234" y="317" width="4" height="1" fill="#000"/>
<rect x="1234" y="314" width="4" height="1" fill="#000"/>
<rect x="1234" y="311" width="4" height="1" fill="#000"/>
<rect x="1234" y="307" width="4" height="1" fill="#000"/>
<rect x="1234" y="304" width="8" height="1" fill="#000"/>
<text transform="translate(1275.5 311) scale(1 1.09)" text-anchor="end" font-size="11">9.15</text>
<rect x="1234" y="301" width="4" height="1" fill="#000"/>
<rect x="1234" y="298" width="4" height="1" fill="#000"/>
<rect x="1234" y="295" width="4" height="1" fill="#000"/>
<rect x="1234" y="292" width="4" height="1" fill="#000"/>
<rect x="1234" y="288" width="8" height="1" fill="#000"/>
<text transform="translate(1275.5 295) scale(1 1.09)" text-anchor="end" font-size="11">9.20</text>
<rect x="1234" y="285" width="4" height="1" fill="#000"/>
<rect x="1234" y="282" width="4" height="1" fill="#000"/>
<rect x="1234" y="279" width="4" height="1" fill="#000"/>
<rect x="1234" y="276" width="4" height="1" fill="#000"/>
<rect x="1234" y="273" width="8" height="1" fill="#000"/>
<text transform="translate(1275.5 280) scale(1 1.09)" text-anchor="end" font-size="11">9.25</text>
<rect x="1234" y="269" width="4" height="1" fill="#000"/>
<rect x="1234" y="266" width="4" height="1" fill="#000"/>
<rect x="1234" y="263" width="4" height="1" fill="#000"/>
<rect x="1234" y="260" width="4" height="1" fill="#000"/>
<rect x="1234" y="257" width="8" height="1" fill="#000"/>
<text transform="translate(1275.5 264) scale(1 1.09)" text-anchor="end" font-size="11">9.30</text>
<rect x="1234" y="254" width="4" height="1" fill="#000"/>
<rect x="1234" y="251" width="4" height="1" fill="#000"/>
<rect x="1234" y="247" width="4" height="1" fill="#000"/>
<rect x="1234" y="244" width="4" height="1" fill="#000"/>
<rect x="1234" y="241" width="8" height="1" fill="#000"/>
<text transform="translate(1275.5 248) scale(1 1.09)" text-anchor="end" font-size="11">9.35</text>
<rect x="1234" y="238" width="4" height="1" fill="#000"/>
<rect x="1234" y="235" width="4" height="1" fill="#000"/>
<rect x="1234" y="232" width="4" height="1" fill="#000"/>
<rect x="1234" y="229" width="4" height="1" fill="#000"/>
<rect x="1234" y="226" width="8" height="1" fill="#000"/>
<text transform="translate(1275.5 233) scale(1 1.09)" text-anchor="end" font-size="11">9.40</text>
<rect x="1234" y="222" width="4" height="1" fill="#000"/>
<rect x="1234" y="219" width="4" height="1" fill="#000"/>
<rect x="1234" y="216" width="4" height="1" fill="#000"/>
<rect x="1234" y="213" width="4" height="1" fill="#000"/>
<rect x="1234" y="210" width="8" height="1" fill="#000"/>
<text transform="translate(1275.5 217) scale(1 1.09)" text-anchor="end" font-size="11">9.45</text>
<rect x="1234" y="207" width="4" height="1" fill="#000"/>
<rect x="1234" y="204" width="4" height="1" fill="#000"/>
<rect x="1234" y="201" width="4" height="1" fill="#000"/>
<rect x="1234" y="198" width="4" height="1" fill="#000"/>
<rect x="1234" y="195" width="8" height="1" fill="#000"/>
<text transform="translate(1275.5 202) scale(1 1.09)" text-anchor="end" font-size="11">9.50</text>
<rect x="1234" y="192" width="4" height="1" fill="#000"/>
<rect x="1234" y="189" width="4" height="1" fill="#000"/>
<rect x="1234" y="186" width="4" height="1" fill="#000"/>
<rect x="1234" y="182" width="4" height="1" fill="#000"/>
<rect x="1234" y="179" width="8" height="1" fill="#000"/>
<text transform="translate(1275.5 186) scale(1 1.09)" text-anchor="end" font-size="11">9.55</text>
<rect x="1234" y="176" width="4" height="1" fill="#000"/>
<rect x="1234" y="173" width="4" height="1" fill="#000"/>
<rect x="4" y="283" width="1" height="35" fill="#0000ff"/>
<rect x="2" y="291" width="5" height="1" fill="#0000ff"/>
<rect x="12" y="292" width="1" height="25" fill="#000"/>
<rect x="19" y="312" width="1" height="18" fill="#0000ff"/>
<rect x="16.5" y="298.5" width="5" height="13" fill="none" stroke="#0000ff"/>
<rect x="27" y="318" width="1" height="55" fill="#000"/>
<rect x="24" y="318" width="6" height="53" fill="#000"/>
<rect x="34" y="383" width="1" height="107" fill="#000"/>
<rect x="31" y="383" width="6" height="69" fill="#000"/>
<rect x="42" y="426" width="1" height="71" fill="#000"/>
<rect x="39" y="446" width="6" height="20" fill="#000"/>
<rect x="49" y="452" width="1" height="65" fill="#000"/>
<rect x="46" y="452" width="6" height="62" fill="#000"/>
<rect x="57" y="490" width="1" height="65" fill="#000"/>
<rect x="54" y="504" width="6" height="42" fill="#000"/>
<rect x="64" y="531" width="1" height="84" fill="#000"/>
<rect x="61" y="531" width="6" height="60" fill="#000"/>
<rect x="72" y="611" width="1" height="14" fill="#000"/>
<rect x="72" y="655" width="1" height="27" fill="#000"/>
<rect x="69.5" y="625.5" width="5" height="29" fill="none" stroke="#000"/>
<rect x="79" y="503" width="1" height="52" fill="#0000ff"/>
<rect x="76.5" y="555.5" width="5" height="81" fill="none" stroke="#0000ff"/>
<rect x="87" y="490" width="1" height="55" fill="#0000ff"/>
<rect x="84" y="507" width="6" height="13" fill="#0000ff"/>
<rect x="95" y="530" width="1" height="30" fill="#0000ff"/>
<rect x="92.5" y="520.5" width="5" height="9" fill="none" stroke="#0000ff"/>
<rect x="102" y="490" width="1" height="46" fill="#000"/>
<rect x="99" y="507" width="6" height="29" fill="#000"/>
<rect x="110" y="490" width="1" height="76" fill="#000"/>
<rect x="107" y="535" width="6" height="31" fill="#000"/>
<rect x="117" y="541" width="1" height="50" fill="#0000ff"/>
<rect x="114" y="546" width="6" height="16" fill="#0000ff"/>
<rect x="125" y="513" width="1" height="11" fill="#0000ff"/>
<rect x="125" y="535" width="1" height="20" fill="#0000ff"/>
<rect x="122.5" y="524.5" width="5" height="10" fill="none" stroke="#0000ff"/>
<rect x="129.5" y="490.5" width="5" height="30" fill="none" stroke="#0000ff"/>
<rect x="140" y="486" width="1" height="73" fill="#000"/>
<rect x="137" y="497" width="6" height="62" fill="#000"/>
<rect x="147" y="535" width="1" height="14" fill="#0000ff"/>
<rect x="145" y="541" width="5" height="1" fill="#0000ff"/>
<rect x="155" y="545" width="1" height="59" fill="#000"/>
<rect x="152" y="545" width="6" height="46" fill="#000"/>
<rect x="162" y="538" width="1" height="35" fill="#0000ff"/>
<rect x="159" y="555" width="6" height="5" fill="#0000ff"/>
<rect x="170" y="531" width="1" height="6" fill="#0000ff"/>
<rect x="170" y="560" width="1" height="6" fill="#0000ff"/>
<rect x="167.5" y="537.5" width="5" height="22" fill="none" stroke="#0000ff"/>
<rect x="177" y="517" width="1" height="11" fill="#0000ff"/>
<rect x="174.5" y="528.5" width="5" height="9" fill="none" stroke="#0000ff"/>
<rect x="185" y="436" width="1" height="9" fill="#0000ff"/>
<rect x="185" y="500" width="1" height="10" fill="#0000ff"/>
<rect x="182.5" y="445.5" width="5" height="54" fill="none" stroke="#0000ff"/>
<rect x="192" y="429" width="1" height="37" fill="#0000ff"/>
<rect x="189" y="436" width="6" height="7" fill="#0000ff"/>
<rect x="200" y="413" width="1" height="29" fill="#0000ff"/>
<rect x="197.5" y="442.5" width="5" height="7" fill="none" stroke="#0000ff"/>
<rect x="207" y="399" width="1" height="6" fill="#0000ff"/>
<rect x="204.5" y="405.5" width="5" height="40" fill="none" stroke="#0000ff"/>
<rect x="215" y="382" width="1" height="7" fill="#0000ff"/>
<rect x="212.5" y="389.5" width="5" height="30" fill="none" stroke="#0000ff"/>
<rect x="222" y="386" width="1" height="51" fill="#000"/>
<rect x="219" y="386" width="6" height="51" fill="#000"/>
<rect x="230" y="419" width="1" height="54" fill="#000"/>
<rect x="227" y="419" width="6" height="33" fill="#000"/>
<rect x="237" y="379" width="1" height="7" fill="#0000ff"/>
<rect x="234.5" y="386.5" width="5" height="49" fill="none" stroke="#0000ff"/>
<rect x="245" y="343" width="1" height="95" fill="#000"/>
<rect x="242" y="396" width="6" height="23" fill="#000"/>
<rect x="252" y="373" width="1" height="53" fill="#000"/>
<rect x="249" y="413" width="6" height="13" fill="#000"/>
<rect x="260" y="387" width="1" height="27" fill="#0000ff"/>
<rect x="257" y="403" width="6" height="11" fill="#0000ff"/>
<rect x="267" y="399" width="1" height="30" fill="#000"/>
<rect x="264" y="406" width="6" height="14" fill="#000"/>
<rect x="275" y="403" width="1" height="63" fill="#000"/>
<rect x="272" y="403" width="6" height="63" fill="#000"/>
<rect x="283" y="429" width="1" height="48" fill="#000"/>
<rect x="280" y="432" width="6" height="45" fill="#000"/>
<rect x="290" y="426" width="1" height="12" fill="#0000ff"/>
<rect x="290" y="477" width="1" height="24" fill="#0000ff"/>
<rect x="287.5" y="438.5" width="5" height="38" fill="none" stroke="#0000ff"/>
<rect x="298" y="396" width="1" height="3" fill="#0000ff"/>
<rect x="295.5" y="399.5" width="5" height="43" fill="none" stroke="#0000ff"/>
<rect x="305" y="392" width="1" height="34" fill="#000"/>
<rect x="302" y="409" width="6" height="17" fill="#000"/>
<rect x="313" y="413" width="1" height="13" fill="#0000ff"/>
<rect x="310.5" y="396.5" width="5" height="16" fill="none" stroke="#0000ff"/>
<rect x="320" y="392" width="1" height="46" fill="#000"/>
<rect x="317" y="392" width="6" height="46" fill="#000"/>
<rect x="328" y="439" width="1" height="54" fill="#000"/>
<rect x="325" y="439" width="6" height="38" fill="#000"/>
<rect x="335" y="463" width="1" height="37" fill="#000"/>
<rect x="332" y="480" width="6" height="20" fill="#000"/>
<rect x="343" y="479" width="1" height="34" fill="#0000ff"/>
<rect x="341" y="479" width="5" height="1" fill="#0000ff"/>
<rect x="350" y="470" width="1" height="23" fill="#000"/>
<rect x="347" y="483" width="6" height="10" fill="#000"/>
<rect x="355.5" y="419.5" width="5" height="84" fill="none" stroke="#0000ff"/>
<rect x="365" y="389" width="1" height="91" fill="#000"/>
<rect x="362" y="389" width="6" height="91" fill="#000"/>
<rect x="373" y="429" width="1" height="44" fill="#0000ff"/>
<rect x="370" y="459" width="6" height="11" fill="#0000ff"/>
<rect x="380" y="439" width="1" height="24" fill="#0000ff"/>
<rect x="378" y="451" width="5" height="1" fill="#0000ff"/>
<rect x="388" y="452" width="1" height="34" fill="#000"/>
<rect x="385" y="452" width="6" height="26" fill="#000"/>
<rect x="395" y="459" width="1" height="41" fill="#000"/>
<rect x="392" y="480" width="6" height="17" fill="#000"/>
<rect x="403" y="479" width="1" height="52" fill="#000"/>
<rect x="400" y="490" width="6" height="34" fill="#000"/>
<rect x="410" y="521" width="1" height="31" fill="#0000ff"/>
<rect x="407.5" y="486.5" width="5" height="34" fill="none" stroke="#0000ff"/>
<rect x="418" y="456" width="1" height="23" fill="#0000ff"/>
<rect x="415.5" y="479.5" width="5" height="4" fill="none" stroke="#0000ff"/>
<rect x="425" y="483" width="1" height="10" fill="#000"/>
<rect x="425" y="498" width="1" height="16" fill="#000"/>
<rect x="422.5" y="493.5" width="5" height="4" fill="none" stroke="#000"/>
<rect x="433" y="483" width="1" height="41" fill="#000"/>
<rect x="430" y="493" width="6" height="31" fill="#000"/>
<rect x="440" y="514" width="1" height="69" fill="#000"/>
<rect x="437" y="514" width="6" height="69" fill="#000"/>
<rect x="448" y="510" width="1" height="31" fill="#0000ff"/>
<rect x="445.5" y="541.5" width="5" height="31" fill="none" stroke="#0000ff"/>
<rect x="456" y="493" width="1" height="45" fill="#0000ff"/>
<rect x="453" y="493" width="6" height="27" fill="#0000ff"/>
<rect x="463" y="497" width="1" height="9" fill="#0000ff"/>
<rect x="463" y="531" width="1" height="4" fill="#0000ff"/>
<rect x="460.5" y="506.5" width="5" height="24" fill="none" stroke="#0000ff"/>
<rect x="471" y="497" width="1" height="16" fill="#000"/>
<rect x="471" y="518" width="1" height="30" fill="#000"/>
<rect x="468.5" y="513.5" width="5" height="4" fill="none" stroke="#000"/>
<rect x="478" y="497" width="1" height="62" fill="#000"/>
<rect x="475" y="497" width="6" height="58" fill="#000"/>
<rect x="486" y="538" width="1" height="45" fill="#000"/>
<rect x="483" y="548" width="6" height="26" fill="#000"/>
<rect x="493" y="566" width="1" height="28" fill="#000"/>
<rect x="490" y="570" width="6" height="20" fill="#000"/>
<rect x="501" y="531" width="1" height="46" fill="#0000ff"/>
<rect x="498" y="562" width="6" height="15" fill="#0000ff"/>
<rect x="508" y="559" width="1" height="49" fill="#000"/>
<rect x="505" y="590" width="6" height="15" fill="#000"/>
<rect x="516" y="609" width="1" height="10" fill="#0000ff"/>
<rect x="513.5" y="569.5" width="5" height="39" fill="none" stroke="#0000ff"/>
<rect x="523" y="562" width="1" height="44" fill="#000"/>
<rect x="520" y="562" width="6" height="36" fill="#000"/>
<rect x="531" y="573" width="1" height="38" fill="#0000ff"/>
<rect x="528" y="590" width="6" height="5" fill="#0000ff"/>
<rect x="538" y="601" width="1" height="47" fill="#000"/>
<rect x="535" y="609" width="6" height="34" fill="#000"/>
<rect x="546" y="601" width="1" height="24" fill="#0000ff"/>
<rect x="546" y="637" width="1" height="45" fill="#0000ff"/>
<rect x="543.5" y="625.5" width="5" height="11" fill="none" stroke="#0000ff"/>
<rect x="553" y="611" width="1" height="31" fill="#000"/>
<rect x="550" y="615" width="6" height="27" fill="#000"/>
<rect x="561" y="630" width="1" height="35" fill="#000"/>
<rect x="558" y="643" width="6" height="9" fill="#000"/>
<rect x="568" y="626" width="1" height="10" fill="#0000ff"/>
<rect x="568" y="642" width="1" height="10" fill="#0000ff"/>
<rect x="565.5" y="636.5" width="5" height="5" fill="none" stroke="#0000ff"/>
<rect x="576" y="611" width="1" height="11" fill="#0000ff"/>
<rect x="576" y="629" width="1" height="7" fill="#0000ff"/>
<rect x="573.5" y="622.5" width="5" height="6" fill="none" stroke="#0000ff"/>
<rect x="583" y="605" width="1" height="6" fill="#0000ff"/>
<rect x="583" y="616" width="1" height="13" fill="#0000ff"/>
<rect x="580.5" y="611.5" width="5" height="4" fill="none" stroke="#0000ff"/>
<rect x="591" y="570" width="1" height="17" fill="#0000ff"/>
<rect x="591" y="605" width="1" height="14" fill="#0000ff"/>
<rect x="588.5" y="587.5" width="5" height="17" fill="none" stroke="#0000ff"/>
<rect x="598" y="559" width="1" height="24" fill="#0000ff"/>
<rect x="595.5" y="583.5" width="5" height="21" fill="none" stroke="#0000ff"/>
<rect x="606" y="528" width="1" height="9" fill="#0000ff"/>
<rect x="606" y="573" width="1" height="6" fill="#0000ff"/>
<rect x="603.5" y="537.5" width="5" height="35" fill="none" stroke="#0000ff"/>
<rect x="613" y="520" width="1" height="17" fill="#0000ff"/>
<rect x="610.5" y="537.5" width="5" height="15" fill="none" stroke="#0000ff"/>
<rect x="621" y="531" width="1" height="36" fill="#000"/>
<rect x="618" y="545" width="6" height="22" fill="#000"/>
<rect x="629" y="545" width="1" height="45" fill="#000"/>
<rect x="626" y="545" width="6" height="32" fill="#000"/>
<rect x="636" y="577" width="1" height="39" fill="#0000ff"/>
<rect x="633.5" y="559.5" width="5" height="17" fill="none" stroke="#0000ff"/>
<rect x="644" y="552" width="1" height="39" fill="#000"/>
<rect x="641" y="559" width="6" height="19" fill="#000"/>
<rect x="651" y="542" width="1" height="21" fill="#0000ff"/>
<rect x="649" y="554" width="5" height="1" fill="#0000ff"/>
<rect x="659" y="493" width="1" height="55" fill="#0000ff"/>
<rect x="656" y="538" width="6" height="10" fill="#0000ff"/>
<rect x="663.5" y="465.5" width="5" height="65" fill="none" stroke="#0000ff"/>
<rect x="674" y="475" width="1" height="36" fill="#000"/>
<rect x="671" y="480" width="6" height="3" fill="#000"/>
<rect x="681" y="452" width="1" height="13" fill="#0000ff"/>
<rect x="681" y="484" width="1" height="7" fill="#0000ff"/>
<rect x="678.5" y="465.5" width="5" height="18" fill="none" stroke="#0000ff"/>
<rect x="689" y="460" width="1" height="4" fill="#0000ff"/>
<rect x="686.5" y="435.5" width="5" height="24" fill="none" stroke="#0000ff"/>
<rect x="696" y="381" width="1" height="45" fill="#0000ff"/>
<rect x="693" y="392" width="6" height="34" fill="#0000ff"/>
<rect x="704" y="396" width="1" height="6" fill="#0000ff"/>
<rect x="704" y="420" width="1" height="6" fill="#0000ff"/>
<rect x="701.5" y="402.5" width="5" height="17" fill="none" stroke="#0000ff"/>
<rect x="711" y="419" width="1" height="34" fill="#000"/>
<rect x="708" y="419" width="6" height="20" fill="#000"/>
<rect x="719" y="432" width="1" height="48" fill="#000"/>
<rect x="716" y="436" width="6" height="28" fill="#000"/>
<rect x="726" y="426" width="1" height="12" fill="#0000ff"/>
<rect x="726" y="480" width="1" height="3" fill="#0000ff"/>
<rect x="723.5" y="438.5" width="5" height="41" fill="none" stroke="#0000ff"/>
<rect x="734" y="415" width="1" height="28" fill="#000"/>
<rect x="734" y="446" width="1" height="7" fill="#000"/>
<rect x="731.5" y="443.5" width="5" height="2" fill="none" stroke="#000"/>
<rect x="741" y="432" width="1" height="33" fill="#000"/>
<rect x="738" y="452" width="6" height="4" fill="#000"/>
<rect x="749" y="439" width="1" height="10" fill="#0000ff"/>
<rect x="749" y="453" width="1" height="7" fill="#0000ff"/>
<rect x="746.5" y="449.5" width="5" height="3" fill="none" stroke="#0000ff"/>
<rect x="756" y="429" width="1" height="9" fill="#0000ff"/>
<rect x="756" y="453" width="1" height="10" fill="#0000ff"/>
<rect x="753.5" y="438.5" width="5" height="14" fill="none" stroke="#0000ff"/>
<rect x="764" y="415" width="1" height="17" fill="#0000ff"/>
<rect x="761.5" y="432.5" width="5" height="20" fill="none" stroke="#0000ff"/>
<rect x="768.5" y="372.5" width="5" height="50" fill="none" stroke="#0000ff"/>
<rect x="779" y="356" width="1" height="41" fill="#000"/>
<rect x="776" y="373" width="6" height="24" fill="#000"/>
<rect x="786" y="327" width="1" height="10" fill="#0000ff"/>
<rect x="783.5" y="337.5" width="5" height="50" fill="none" stroke="#0000ff"/>
<rect x="794" y="288" width="1" height="14" fill="#0000ff"/>
<rect x="791.5" y="302.5" width="5" height="37" fill="none" stroke="#0000ff"/>
<rect x="802" y="260" width="1" height="28" fill="#0000ff"/>
<rect x="802" y="315" width="1" height="5" fill="#0000ff"/>
<rect x="799.5" y="288.5" width="5" height="26" fill="none" stroke="#0000ff"/>
<rect x="809" y="299" width="1" height="13" fill="#0000ff"/>
<rect x="806.5" y="279.5" width="5" height="19" fill="none" stroke="#0000ff"/>
<rect x="817" y="267" width="1" height="59" fill="#000"/>
<rect x="814" y="280" width="6" height="46" fill="#000"/>
<rect x="824" y="308" width="1" height="3" fill="#0000ff"/>
<rect x="824" y="335" width="1" height="9" fill="#0000ff"/>
<rect x="821.5" y="311.5" width="5" height="23" fill="none" stroke="#0000ff"/>
<rect x="832" y="302" width="1" height="25" fill="#000"/>
<rect x="829" y="305" width="6" height="10" fill="#000"/>
<rect x="839" y="305" width="1" height="39" fill="#000"/>
<rect x="836" y="305" width="6" height="22" fill="#000"/>
<rect x="847" y="260" width="1" height="7" fill="#0000ff"/>
<rect x="847" y="312" width="1" height="3" fill="#0000ff"/>
<rect x="844.5" y="267.5" width="5" height="44" fill="none" stroke="#0000ff"/>
<rect x="854" y="283" width="1" height="41" fill="#000"/>
<rect x="851" y="286" width="6" height="23" fill="#000"/>
<rect x="862" y="312" width="1" height="52" fill="#000"/>
<rect x="859" y="312" width="6" height="28" fill="#000"/>
<rect x="869" y="344" width="1" height="42" fill="#000"/>
<rect x="866" y="344" width="6" height="23" fill="#000"/>
<rect x="877" y="324" width="1" height="22" fill="#0000ff"/>
<rect x="874.5" y="346.5" width="5" height="14" fill="none" stroke="#0000ff"/>
<rect x="884" y="350" width="1" height="24" fill="#000"/>
<rect x="892" y="361" width="1" height="32" fill="#0000ff"/>
<rect x="889.5" y="349.5" width="5" height="11" fill="none" stroke="#0000ff"/>
<rect x="899" y="337" width="1" height="55" fill="#000"/>
<rect x="896" y="344" width="6" height="42" fill="#000"/>
<rect x="907" y="399" width="1" height="23" fill="#000"/>
<rect x="914" y="386" width="1" height="34" fill="#000"/>
<rect x="922" y="392" width="1" height="7" fill="#0000ff"/>
<rect x="922" y="404" width="1" height="16" fill="#0000ff"/>
<rect x="919.5" y="399.5" width="5" height="4" fill="none" stroke="#0000ff"/>
<rect x="929" y="366" width="1" height="9" fill="#0000ff"/>
<rect x="926.5" y="375.5" width="5" height="11" fill="none" stroke="#0000ff"/>
<rect x="937" y="375" width="1" height="41" fill="#000"/>
<rect x="934" y="385" width="6" height="24" fill="#000"/>
<rect x="944" y="400" width="1" height="15" fill="#0000ff"/>
<rect x="941.5" y="356.5" width="5" height="43" fill="none" stroke="#0000ff"/>
<rect x="952" y="324" width="1" height="10" fill="#0000ff"/>
<rect x="952" y="357" width="1" height="17" fill="#0000ff"/>
<rect x="949.5" y="334.5" width="5" height="22" fill="none" stroke="#0000ff"/>
<rect x="959" y="305" width="1" height="30" fill="#0000ff"/>
<rect x="956" y="324" width="6" height="6" fill="#0000ff"/>
<rect x="967" y="324" width="1" height="43" fill="#000"/>
<rect x="964" y="324" width="6" height="32" fill="#000"/>
<rect x="975" y="334" width="1" height="26" fill="#0000ff"/>
<rect x="973" y="346" width="5" height="1" fill="#0000ff"/>
<rect x="982" y="324" width="1" height="13" fill="#0000ff"/>
<rect x="982" y="353" width="1" height="8" fill="#0000ff"/>
<rect x="979.5" y="337.5" width="5" height="15" fill="none" stroke="#0000ff"/>
<rect x="990" y="327" width="1" height="17" fill="#000"/>
<rect x="987" y="337" width="6" height="4" fill="#000"/>
<rect x="997" y="330" width="1" height="9" fill="#000"/>
<rect x="994.5" y="339.5" width="5" height="15" fill="none" stroke="#000"/>
<rect x="1005" y="337" width="1" height="23" fill="#000"/>
<rect x="1002" y="340" width="6" height="14" fill="#000"/>
<rect x="1012" y="340" width="1" height="10" fill="#0000ff"/>
<rect x="1009.5" y="350.5" width="5" height="16" fill="none" stroke="#0000ff"/>
<rect x="1020" y="337" width="1" height="79" fill="#000"/>
<rect x="1017" y="337" width="6" height="19" fill="#000"/>
<rect x="1027" y="354" width="1" height="39" fill="#000"/>
<rect x="1024" y="354" width="6" height="32" fill="#000"/>
<rect x="1035" y="370" width="1" height="60" fill="#000"/>
<rect x="1032" y="386" width="6" height="3" fill="#000"/>
<rect x="1042" y="389" width="1" height="33" fill="#000"/>
<rect x="1039" y="392" width="6" height="7" fill="#000"/>
<rect x="1050" y="370" width="1" height="19" fill="#0000ff"/>
<rect x="1050" y="403" width="1" height="13" fill="#0000ff"/>
<rect x="1047.5" y="389.5" width="5" height="13" fill="none" stroke="#0000ff"/>
<rect x="1057" y="371" width="1" height="4" fill="#0000ff"/>
<rect x="1057" y="393" width="1" height="23" fill="#0000ff"/>
<rect x="1054.5" y="375.5" width="5" height="17" fill="none" stroke="#0000ff"/>
<rect x="1065" y="356" width="1" height="26" fill="#000"/>
<rect x="1072" y="378" width="1" height="12" fill="#0000ff"/>
<rect x="1069.5" y="363.5" width="5" height="14" fill="none" stroke="#0000ff"/>
<rect x="1080" y="356" width="1" height="7" fill="#0000ff"/>
<rect x="1077.5" y="363.5" width="5" height="9" fill="none" stroke="#0000ff"/>
<rect x="1087" y="360" width="1" height="14" fill="#000"/>
<rect x="1095" y="341" width="1" height="31" fill="#000"/>
<rect x="1092" y="360" width="6" height="12" fill="#000"/>
<rect x="1102" y="360" width="1" height="26" fill="#000"/>
<rect x="1099" y="373" width="6" height="13" fill="#000"/>
<rect x="1110" y="392" width="1" height="45" fill="#000"/>
<rect x="1107" y="415" width="6" height="12" fill="#000"/>
<rect x="1117" y="360" width="1" height="36" fill="#0000ff"/>
<rect x="1114.5" y="396.5" width="5" height="9" fill="none" stroke="#0000ff"/>
<rect x="1125" y="375" width="1" height="41" fill="#000"/>
<rect x="1122" y="386" width="6" height="27" fill="#000"/>
<rect x="1132" y="396" width="1" height="9" fill="#0000ff"/>
<rect x="1132" y="420" width="1" height="10" fill="#0000ff"/>
<rect x="1129.5" y="405.5" width="5" height="14" fill="none" stroke="#0000ff"/>
<rect x="1137.5" y="372.5" width="5" height="40" fill="none" stroke="#0000ff"/>
<rect x="1148" y="366" width="1" height="6" fill="#0000ff"/>
<rect x="1145.5" y="372.5" width="5" height="36" fill="none" stroke="#0000ff"/>
<line x1="57" y1="210.5" x2="1234" y2="210.5" stroke="#808080" stroke-width="1" stroke-dasharray="3 3"/>
<rect x="0" y="210" width="57" height="2" fill="#00ff00"/>
<line x1="0" y1="353.5" x2="1234" y2="353.5" stroke="#808080" stroke-width="1" stroke-dasharray="3 3"/>
<rect x="0" y="243" width="1234" height="1" fill="#0000ff"/>
<rect x="545" y="260" width="689" height="1" fill="#000"/>
<rect x="545" y="680" width="689" height="1" fill="#000"/>
<line x1="545" y1="354.5" x2="1234" y2="354.5" stroke="#000" stroke-width="1" stroke-dasharray="3 3"/>
<line x1="545" y1="413.5" x2="1234" y2="413.5" stroke="#000" stroke-width="1" stroke-dasharray="3 3"/>
<line x1="545" y1="463.5" x2="1234" y2="463.5" stroke="#000" stroke-width="1" stroke-dasharray="3 3"/>
<line x1="545" y1="512.5" x2="1234" y2="512.5" stroke="#000" stroke-width="1" stroke-dasharray="3 3"/>
<text transform="translate(535.5 265) scale(1 1.09)" text-anchor="end" font-size="11">0.0%</text>
<text transform="translate(535.5 359) scale(1 1.09)" text-anchor="end" font-size="11">23.6%</text>
<text transform="translate(535.5 418) scale(1 1.09)" text-anchor="end" font-size="11">38.2%</text>
<text transform="translate(535.5 468) scale(1 1.09)" text-anchor="end" font-size="11">50.0%</text>
<text transform="translate(535.5 517) scale(1 1.09)" text-anchor="end" font-size="11">61.8%</text>
<text transform="translate(535.5 685) scale(1 1.09)" text-anchor="end" font-size="11">100.0%</text>
<line x1="0" y1="590.5" x2="1234" y2="590.5" stroke="#0000ff" stroke-width="1" stroke-dasharray="3 3"/>
<rect x="0" y="385" width="787" height="2" fill="#0000ff"/>
<rect x="50" y="492" width="624" height="2" fill="#0000ff"/>
<rect x="0" y="668" width="1234" height="2" fill="#000"/>
<line x1="787" y1="402.5" x2="990" y2="402.5" stroke="#ff0000" stroke-width="1" stroke-dasharray="4 2"/>
<line x1="372" y1="450.5" x2="393" y2="450.5" stroke="#ff00ff" stroke-width="1" stroke-dasharray="4 2"/>
<line x1="0.5" y1="236.5" x2="656.5" y2="510.5" stroke="#0000ff" stroke-width="1" stroke-dasharray="3 3"/>
<line x1="65" y1="505.5" x2="260.5" y2="330.5" stroke="#0000ff" stroke-width="1"/>
<line x1="72.5" y1="681.5" x2="342.5" y2="436.5" stroke="#0000ff" stroke-width="1"/>
<line x1="538.5" y1="690.5" x2="876.5" y2="338.5" stroke="#0000ff" stroke-width="1.6"/>
<line x1="546.5" y1="690.5" x2="636.5" y2="544.5" stroke="#0000ff" stroke-width="1"/>
<line x1="638" y1="615.5" x2="719.5" y2="401.5" stroke="#0000ff" stroke-width="1"/>
<line x1="824.5" y1="250.5" x2="1161.5" y2="361.5" stroke="#0000ff" stroke-width="1"/>
<line x1="854.5" y1="417.5" x2="1148" y2="440" stroke="#0000ff" stroke-width="1"/>
<line x1="447.5" y1="728.5" x2="1103" y2="401.5" stroke="#000" stroke-width="1.7"/>
<polyline points="-1.5,369.5 0.5,369.5 27.5,369.5 31.5,382.5 50.5,382.5 57.5,414.5 86.5,414.5 88.5,420.5 94.5,445.5 97.5,480.5 101.5,548.5 108.5,595.5 116.5,625.5 121.5,648.5 124.5,662.5 131.5,632.5 177.5,632.5 181.5,590.5 184.5,572.5 192.5,548.5 200.5,527.5 207.5,510.5 214.5,496.5 290.5,496.5 312.5,497.5 320.5,509.5 388.5,509.5 394.5,532.5 432.5,532.5 436.5,546.5 440.5,566.5 447.5,568.5 455.5,573.5 485.5,573.5 493.5,593.5 501.5,593.5 508.5,622.5 537.5,622.5 545.5,640.5 553.5,654.5 568.5,654.5 576,683.5 584,683.5 590,668 599,657 605.5,634.5 614,623 651,623 660.5,605.5 666.5,598 674.5,598 678.5,583 689.5,545.5 693,513 696.5,498 764.5,498 773,473 786.5,445.5 790.5,425.5 796.5,402.5 801.5,385.5 840.5,385.5 847.5,378.5 914.5,378.5 919.5,392.5 925.5,420.5 930,438 933.5,443.5 938,446.5 945,446.5 949.5,440.5 953.5,430.5 959.5,406.5 1028,406.5 1035,410.5 1065.5,410.5 1080.5,413.5 1088,431.5 1095.5,413.5 1148,413.5" fill="none" stroke="#ff0000" stroke-width="1"/>
<polyline points="-1.5,306.5 0.5,306.5 10.5,304.5 20.5,303.5 22.5,305.5 28,317.5 35.5,337.5 41.5,352.5 46.5,367.5 51.5,385.5 57.5,410.5 64.5,437.5 72.5,460.5 79.5,473.5 86.5,481.5 94.5,488.5 101.5,495.5 109.5,505.5 116.5,514.5 124.5,516.5 131.5,512.5 139.5,520.5 147.5,526.5 154.5,533.5 162.5,537.5 170.5,537.5 177.5,536.5 184.5,522.5 192.5,510.5 200.5,498.5 207.5,483.5 214.5,470.5 222.5,463.5 230.5,460.5 237.5,450.5 244.5,445.5 252.5,442.5 260.5,437.5 267.5,435.5 275.5,438.5 282.5,443.5 290.5,444.5 297.5,440.5 305.5,436.5 312.5,431.5 320.5,430.5 327.5,437.5 335.5,445.5 342.5,452.5 350.5,458.5 357.5,452.5 365.5,455.5 372.5,458.5 380.5,457.5 387.5,462.5 395.5,465.5 403.5,473.5 410.5,476.5 417.5,476.5 425.5,480.5 432.5,485.5 440.5,500.5 447.5,508.5 455.5,509.5 462.5,509.5 470.5,509.5 478.5,516.5 485.5,524.5 492.5,531.5 500.5,538.5 508.5,550.5 515.5,553.5 523.5,560.5 531.5,570.5 538.5,578.5 545.5,588.5 553.5,595.5 561.5,603.5 568.5,607.5 575.5,609.5 583.5,609.5 590.5,607.5 598.5,603.5 605.5,595.5 613.5,585.5 620.5,582.5 628.5,580.5 636.5,577.5 643.5,577.5 651.5,575.5 659.5,570.5 666.5,558.5 673.5,545.5 680.5,530.5 688.5,515.5 696.5,497.5 703.5,485.5 711.5,479.5 719.5,477.5 726.5,472.5 733.5,466.5 741.5,465.5 748.5,462.5 756.5,460.5 764.5,455.5 771.5,444.5 779.5,435.5 786.5,420.5 793.5,400.5 801.5,380.5 809.5,367.5 816.5,360.5 824.5,352.5 832.5,347.5 839.5,344.5 846.5,332.5 854.5,328.5 862.5,330.5 869.5,336.5 876.5,338.5 884.5,340.5 892.5,342.5 899.5,348.5 907.5,356.5 914.5,364.5 922.5,369.5 929.5,370.5 937.5,376.5 944.5,373.5 952.5,366.5 959.5,361.5 967.5,359.5 974.5,357.5 981.5,354.5 989.5,352.5 997.5,352.5 1004.5,353.5 1012.5,353.5 1020.5,354.5 1027.5,360.5 1034.5,365.5 1042.5,370.5 1049.5,372.5 1057.5,373.5 1064.5,373.5 1072.5,372.5 1079.5,371.5 1087.5,370.5 1095.5,369.5 1102.5,373.5 1109.5,380.5 1117.5,383.5 1125.5,387.5 1132.5,390.5 1140.5,388.5 1147.5,386.5" fill="none" stroke="#000" stroke-width="1"/>
<polyline points="-1.5,305.5 0.5,305.5 5.5,303.5 10.5,302.5 20.5,302.5 22.5,305.5 25.5,312.5 30.5,335.5 35.5,360.5 41.5,385.5 50.5,420.5 57.5,460.5 64.5,500.5 72.5,530.5 79.5,538.5 86.5,535.5 94.5,531.5 101.5,530.5 109.5,538.5 116.5,546.5 124.5,538.5 131.5,527.5 139.5,534.5 147.5,537.5 154.5,548.5 162.5,553.5 170.5,550.5 177.5,545.5 184.5,520.5 192.5,495.5 200.5,480.5 207.5,458.5 214.5,438.5 222.5,438.5 230.5,441.5 237.5,427.5 244.5,425.5 252.5,424.5 260.5,422.5 267.5,420.5 275.5,432.5 282.5,443.5 290.5,440.5 297.5,432.5 305.5,428.5 312.5,420.5 320.5,425.5 327.5,440.5 335.5,455.5 342.5,463.5 350.5,471.5 357.5,458.5 365.5,463.5 372.5,466.5 380.5,461.5 387.5,465.5 395.5,475.5 403.5,490.5 410.5,488.5 417.5,486.5 425.5,488.5 432.5,497.5 440.5,522.5 447.5,527.5 455.5,526.5 462.5,522.5 470.5,518.5 478.5,530.5 485.5,545.5 493.5,555.5 501.5,563.5 508.5,571.5 515.5,572.5 523.5,578.5 531.5,585.5 538.5,600.5 545.5,608.5 553.5,618.5 561.5,627.5 568.5,629.5 575.5,629.5 583.5,622.5 590.5,611.5 598.5,600.5 605.5,590.5 613.5,572.5 620.5,570.5 628.5,573.5 636.5,568.5 643.5,571.5 651.5,566.5 659.5,560.5 666.5,540.5 673.5,515.5 680.5,495.5 688.5,470.5 696.5,455.5 703.5,450.5 711.5,446.5 719.5,450.5 726.5,447.5 733.5,446.5 741.5,448.5 748.5,448.5 756.5,446.5 764.5,442.5 771.5,425.5 779.5,410.5 786.5,390.5 793.5,355.5 801.5,340.5 809.5,326.5 816.5,326.5 824.5,322.5 832.5,320.5 839.5,321.5 846.5,307.5 854.5,307.5 862.5,322.5 869.5,330.5 876.5,337.5 884.5,341.5 892.5,347.5 899.5,355.5 907.5,367.5 914.5,376.5 922.5,385.5 929.5,383.5 937.5,390.5 944.5,380.5 952.5,363.5 959.5,357.5 967.5,357.5 974.5,352.5 981.5,349.5 989.5,347.5 997.5,345.5 1004.5,347.5 1012.5,347.5 1020.5,351.5 1027.5,362.5 1034.5,370.5 1042.5,377.5 1049.5,380.5 1057.5,380.5 1064.5,379.5 1072.5,375.5 1079.5,372.5 1087.5,372.5 1095.5,371.5 1102.5,374.5 1109.5,385.5 1117.5,392.5 1125.5,396.5 1132.5,399.5 1140.5,393.5 1147.5,387.5" fill="none" stroke="#ff00ff" stroke-width="1"/>
<rect x="3" y="234" width="2" height="2" fill="#000"/>
<rect x="11" y="236" width="2" height="2" fill="#000"/>
<rect x="19" y="239" width="2" height="2" fill="#000"/>
<rect x="26" y="241" width="2" height="2" fill="#000"/>
<rect x="34" y="247" width="2" height="2" fill="#000"/>
<rect x="41" y="260" width="2" height="2" fill="#000"/>
<rect x="49" y="279" width="2" height="2" fill="#000"/>
<rect x="56" y="301" width="2" height="2" fill="#000"/>
<rect x="63" y="330" width="2" height="2" fill="#000"/>
<rect x="72" y="369" width="2" height="2" fill="#000"/>
<rect x="78" y="416" width="2" height="2" fill="#000"/>
<rect x="86" y="456" width="2" height="2" fill="#000"/>
<rect x="94" y="488" width="2" height="2" fill="#000"/>
<rect x="102" y="488" width="2" height="2" fill="#000"/>
<rect x="108" y="679" width="2" height="2" fill="#000"/>
<rect x="116" y="675" width="2" height="2" fill="#000"/>
<rect x="124" y="672" width="2" height="2" fill="#000"/>
<rect x="138" y="664" width="2" height="2" fill="#000"/>
<rect x="146" y="656" width="2" height="2" fill="#000"/>
<rect x="154" y="649" width="2" height="2" fill="#000"/>
<rect x="161" y="642" width="2" height="2" fill="#000"/>
<rect x="169" y="637" width="2" height="2" fill="#000"/>
<rect x="176" y="631" width="2" height="2" fill="#000"/>
<rect x="184" y="624" width="2" height="2" fill="#000"/>
<rect x="191" y="612" width="2" height="2" fill="#000"/>
<rect x="199" y="597" width="2" height="2" fill="#000"/>
<rect x="206" y="578" width="2" height="2" fill="#000"/>
<rect x="214" y="556" width="2" height="2" fill="#000"/>
<rect x="222" y="531" width="2" height="2" fill="#000"/>
<rect x="229" y="510" width="2" height="2" fill="#000"/>
<rect x="236" y="490" width="2" height="2" fill="#000"/>
<rect x="244" y="473" width="2" height="2" fill="#000"/>
<rect x="252" y="449" width="2" height="2" fill="#000"/>
<rect x="260" y="438" width="2" height="2" fill="#000"/>
<rect x="267" y="342" width="2" height="2" fill="#000"/>
<rect x="275" y="344" width="2" height="2" fill="#000"/>
<rect x="282" y="348" width="2" height="2" fill="#000"/>
<rect x="289" y="356" width="2" height="2" fill="#000"/>
<rect x="297" y="368" width="2" height="2" fill="#000"/>
<rect x="305" y="378" width="2" height="2" fill="#000"/>
<rect x="312" y="386" width="2" height="2" fill="#000"/>
<rect x="320" y="391" width="2" height="2" fill="#000"/>
<rect x="327" y="391" width="2" height="2" fill="#000"/>
<rect x="335" y="391" width="2" height="2" fill="#000"/>
<rect x="342" y="400" width="2" height="2" fill="#000"/>
<rect x="350" y="411" width="2" height="2" fill="#000"/>
<rect x="358" y="513" width="2" height="2" fill="#000"/>
<rect x="365" y="511" width="2" height="2" fill="#000"/>
<rect x="372" y="506" width="2" height="2" fill="#000"/>
<rect x="380" y="501" width="2" height="2" fill="#000"/>
<rect x="387" y="496" width="2" height="2" fill="#000"/>
<rect x="395" y="388" width="2" height="2" fill="#000"/>
<rect x="402" y="389" width="2" height="2" fill="#000"/>
<rect x="410" y="396" width="2" height="2" fill="#000"/>
<rect x="417" y="405" width="2" height="2" fill="#000"/>
<rect x="424" y="414" width="2" height="2" fill="#000"/>
<rect x="432" y="421" width="2" height="2" fill="#000"/>
<rect x="440" y="429" width="2" height="2" fill="#000"/>
<rect x="447" y="441" width="2" height="2" fill="#000"/>
<rect x="455" y="452" width="2" height="2" fill="#000"/>
<rect x="463" y="462" width="2" height="2" fill="#000"/>
<rect x="470" y="472" width="2" height="2" fill="#000"/>
<rect x="478" y="481" width="2" height="2" fill="#000"/>
<rect x="485" y="488" width="2" height="2" fill="#000"/>
<rect x="493" y="496" width="2" height="2" fill="#000"/>
<rect x="500" y="506" width="2" height="2" fill="#000"/>
<rect x="508" y="515" width="2" height="2" fill="#000"/>
<rect x="515" y="525" width="2" height="2" fill="#000"/>
<rect x="523" y="537" width="2" height="2" fill="#000"/>
<rect x="531" y="548" width="2" height="2" fill="#000"/>
<rect x="538" y="558" width="2" height="2" fill="#000"/>
<rect x="545" y="572" width="2" height="2" fill="#000"/>
<rect x="553" y="590" width="2" height="2" fill="#000"/>
<rect x="560" y="600" width="2" height="2" fill="#000"/>
<rect x="567" y="610" width="2" height="2" fill="#000"/>
<rect x="576" y="680" width="2" height="2" fill="#000"/>
<rect x="584" y="676" width="2" height="2" fill="#000"/>
<rect x="591" y="674" width="2" height="2" fill="#000"/>
<rect x="598" y="667" width="2" height="2" fill="#000"/>
<rect x="606" y="659" width="2" height="2" fill="#000"/>
<rect x="613" y="644" width="2" height="2" fill="#000"/>
<rect x="621" y="629" width="2" height="2" fill="#000"/>
<rect x="628" y="616" width="2" height="2" fill="#000"/>
<rect x="636" y="519" width="2" height="2" fill="#000"/>
<rect x="643" y="521" width="2" height="2" fill="#000"/>
<rect x="651" y="523" width="2" height="2" fill="#000"/>
<rect x="658" y="613" width="2" height="2" fill="#000"/>
<rect x="665" y="611" width="2" height="2" fill="#000"/>
<rect x="673" y="606" width="2" height="2" fill="#000"/>
<rect x="680" y="599" width="2" height="2" fill="#000"/>
<rect x="688" y="591" width="2" height="2" fill="#000"/>
<rect x="695" y="578" width="2" height="2" fill="#000"/>
<rect x="703" y="558" width="2" height="2" fill="#000"/>
<rect x="711" y="540" width="2" height="2" fill="#000"/>
<rect x="718" y="523" width="2" height="2" fill="#000"/>
<rect x="725" y="508" width="2" height="2" fill="#000"/>
<rect x="733" y="495" width="2" height="2" fill="#000"/>
<rect x="741" y="484" width="2" height="2" fill="#000"/>
<rect x="748" y="474" width="2" height="2" fill="#000"/>
<rect x="756" y="465" width="2" height="2" fill="#000"/>
<rect x="764" y="462" width="2" height="2" fill="#000"/>
<rect x="772" y="462" width="2" height="2" fill="#000"/>
<rect x="778" y="451" width="2" height="2" fill="#000"/>
<rect x="786" y="435" width="2" height="2" fill="#000"/>
<rect x="794" y="419" width="2" height="2" fill="#000"/>
<rect x="801" y="395" width="2" height="2" fill="#000"/>
<rect x="809" y="371" width="2" height="2" fill="#000"/>
<rect x="816" y="346" width="2" height="2" fill="#000"/>
<rect x="824" y="259" width="2" height="2" fill="#000"/>
<rect x="831" y="261" width="2" height="2" fill="#000"/>
<rect x="839" y="262" width="2" height="2" fill="#000"/>
<rect x="846" y="346" width="2" height="2" fill="#000"/>
<rect x="854" y="346" width="2" height="2" fill="#000"/>
<rect x="861" y="259" width="2" height="2" fill="#000"/>
<rect x="869" y="261" width="2" height="2" fill="#000"/>
<rect x="876" y="266" width="2" height="2" fill="#000"/>
<rect x="884" y="271" width="2" height="2" fill="#000"/>
<rect x="892" y="276" width="2" height="2" fill="#000"/>
<rect x="900" y="282" width="2" height="2" fill="#000"/>
<rect x="906" y="288" width="2" height="2" fill="#000"/>
<rect x="914" y="299" width="2" height="2" fill="#000"/>
<rect x="922" y="309" width="2" height="2" fill="#000"/>
<rect x="929" y="318" width="2" height="2" fill="#000"/>
<rect x="936" y="325" width="2" height="2" fill="#000"/>
<rect x="944" y="333" width="2" height="2" fill="#000"/>
<rect x="952" y="421" width="2" height="2" fill="#000"/>
<rect x="959" y="419" width="2" height="2" fill="#000"/>
<rect x="966" y="414" width="2" height="2" fill="#000"/>
<rect x="974" y="411" width="2" height="2" fill="#000"/>
<rect x="982" y="406" width="2" height="2" fill="#000"/>
<rect x="989" y="402" width="2" height="2" fill="#000"/>
<rect x="997" y="398" width="2" height="2" fill="#000"/>
<rect x="1004" y="394" width="2" height="2" fill="#000"/>
<rect x="1012" y="390" width="2" height="2" fill="#000"/>
<rect x="1020" y="304" width="2" height="2" fill="#000"/>
<rect x="1027" y="306" width="2" height="2" fill="#000"/>
<rect x="1034" y="308" width="2" height="2" fill="#000"/>
<rect x="1042" y="313" width="2" height="2" fill="#000"/>
<rect x="1049" y="318" width="2" height="2" fill="#000"/>
<rect x="1056" y="321" width="2" height="2" fill="#000"/>
<rect x="1064" y="325" width="2" height="2" fill="#000"/>
<rect x="1072" y="330" width="2" height="2" fill="#000"/>
<rect x="1080" y="334" width="2" height="2" fill="#000"/>
<rect x="1087" y="338" width="2" height="2" fill="#000"/>
<rect x="1095" y="428" width="2" height="2" fill="#000"/>
<rect x="1102" y="426" width="2" height="2" fill="#000"/>
<rect x="1109" y="338" width="2" height="2" fill="#000"/>
<rect x="1117" y="341" width="2" height="2" fill="#000"/>
<rect x="1125" y="343" width="2" height="2" fill="#000"/>
<rect x="1132" y="344" width="2" height="2" fill="#000"/>
<rect x="1140" y="346" width="2" height="2" fill="#000"/>
<rect x="1147" y="349" width="2" height="2" fill="#000"/>
<rect x="4" y="823" width="1" height="13" fill="#0000ff"/>
<rect x="11" y="833" width="1" height="3" fill="#0000ff"/>
<rect x="19" y="831" width="1" height="5" fill="#0000ff"/>
<rect x="26" y="801" width="1" height="35" fill="#0000ff"/>
<rect x="34" y="810" width="1" height="26" fill="#0000ff"/>
<rect x="42" y="816" width="1" height="20" fill="#0000ff"/>
<rect x="49" y="825" width="1" height="11" fill="#0000ff"/>
<rect x="56" y="826" width="1" height="10" fill="#0000ff"/>
<rect x="64" y="821" width="1" height="15" fill="#0000ff"/>
<rect x="72" y="814" width="1" height="22" fill="#0000ff"/>
<rect x="79" y="810" width="1" height="26" fill="#0000ff"/>
<rect x="86" y="825" width="1" height="11" fill="#0000ff"/>
<rect x="94" y="781" width="1" height="55" fill="#0000ff"/>
<rect x="102" y="804" width="1" height="32" fill="#0000ff"/>
<rect x="109" y="775" width="1" height="61" fill="#0000ff"/>
<rect x="116" y="739" width="1" height="97" fill="#0000ff"/>
<rect x="124" y="823" width="1" height="13" fill="#0000ff"/>
<rect x="132" y="819" width="1" height="17" fill="#0000ff"/>
<rect x="139" y="820" width="1" height="16" fill="#0000ff"/>
<rect x="147" y="835" width="1" height="1" fill="#0000ff"/>
<rect x="154" y="813" width="1" height="23" fill="#0000ff"/>
<rect x="161" y="787" width="1" height="49" fill="#0000ff"/>
<rect x="170" y="832" width="1" height="4" fill="#0000ff"/>
<rect x="177" y="834" width="1" height="2" fill="#0000ff"/>
<rect x="184" y="827" width="1" height="9" fill="#0000ff"/>
<rect x="191" y="804" width="1" height="32" fill="#0000ff"/>
<rect x="200" y="827" width="1" height="9" fill="#0000ff"/>
<rect x="207" y="830" width="1" height="6" fill="#0000ff"/>
<rect x="214" y="830" width="1" height="6" fill="#0000ff"/>
<rect x="222" y="830" width="1" height="6" fill="#0000ff"/>
<rect x="229" y="831" width="1" height="5" fill="#0000ff"/>
<rect x="237" y="826" width="1" height="10" fill="#0000ff"/>
<rect x="244" y="806" width="1" height="30" fill="#0000ff"/>
<rect x="252" y="826" width="1" height="10" fill="#0000ff"/>
<rect x="259" y="829" width="1" height="7" fill="#0000ff"/>
<rect x="267" y="831" width="1" height="5" fill="#0000ff"/>
<rect x="275" y="829" width="1" height="7" fill="#0000ff"/>
<rect x="282" y="825" width="1" height="11" fill="#0000ff"/>
<rect x="289" y="828" width="1" height="8" fill="#0000ff"/>
<rect x="298" y="830" width="1" height="6" fill="#0000ff"/>
<rect x="305" y="831" width="1" height="5" fill="#0000ff"/>
<rect x="312" y="827" width="1" height="9" fill="#0000ff"/>
<rect x="320" y="832" width="1" height="4" fill="#0000ff"/>
<rect x="327" y="826" width="1" height="10" fill="#0000ff"/>
<rect x="335" y="832" width="1" height="4" fill="#0000ff"/>
<rect x="342" y="833" width="1" height="3" fill="#0000ff"/>
<rect x="350" y="825" width="1" height="11" fill="#0000ff"/>
<rect x="357" y="820" width="1" height="16" fill="#0000ff"/>
<rect x="365" y="827" width="1" height="9" fill="#0000ff"/>
<rect x="372" y="831" width="1" height="5" fill="#0000ff"/>
<rect x="380" y="833" width="1" height="3" fill="#0000ff"/>
<rect x="387" y="831" width="1" height="5" fill="#0000ff"/>
<rect x="395" y="830" width="1" height="6" fill="#0000ff"/>
<rect x="403" y="831" width="1" height="5" fill="#0000ff"/>
<rect x="410" y="832" width="1" height="4" fill="#0000ff"/>
<rect x="417" y="833" width="1" height="3" fill="#0000ff"/>
<rect x="425" y="833" width="1" height="3" fill="#0000ff"/>
<rect x="433" y="833" width="1" height="3" fill="#0000ff"/>
<rect x="440" y="832" width="1" height="4" fill="#0000ff"/>
<rect x="447" y="830" width="1" height="6" fill="#0000ff"/>
<rect x="455" y="825" width="1" height="11" fill="#0000ff"/>
<rect x="463" y="827" width="1" height="9" fill="#0000ff"/>
<rect x="470" y="831" width="1" height="5" fill="#0000ff"/>
<rect x="478" y="829" width="1" height="7" fill="#0000ff"/>
<rect x="485" y="829" width="1" height="7" fill="#0000ff"/>
<rect x="493" y="832" width="1" height="4" fill="#0000ff"/>
<rect x="500" y="827" width="1" height="9" fill="#0000ff"/>
<rect x="508" y="830" width="1" height="6" fill="#0000ff"/>
<rect x="515" y="830" width="1" height="6" fill="#0000ff"/>
<rect x="522" y="830" width="1" height="6" fill="#0000ff"/>
<rect x="531" y="833" width="1" height="3" fill="#0000ff"/>
<rect x="538" y="829" width="1" height="7" fill="#0000ff"/>
<rect x="545" y="829" width="1" height="7" fill="#0000ff"/>
<rect x="552" y="821" width="1" height="15" fill="#0000ff"/>
<rect x="561" y="823" width="1" height="13" fill="#0000ff"/>
<rect x="568" y="820" width="1" height="16" fill="#0000ff"/>
<rect x="575" y="820" width="1" height="16" fill="#0000ff"/>
<rect x="583" y="829" width="1" height="7" fill="#0000ff"/>
<rect x="591" y="820" width="1" height="16" fill="#0000ff"/>
<rect x="598" y="826" width="1" height="10" fill="#0000ff"/>
<rect x="606" y="820" width="1" height="16" fill="#0000ff"/>
<rect x="613" y="833" width="1" height="3" fill="#0000ff"/>
<rect x="620" y="819" width="1" height="17" fill="#0000ff"/>
<rect x="628" y="827" width="1" height="9" fill="#0000ff"/>
<rect x="636" y="826" width="1" height="10" fill="#0000ff"/>
<rect x="643" y="828" width="1" height="8" fill="#0000ff"/>
<rect x="650" y="831" width="1" height="5" fill="#0000ff"/>
<rect x="659" y="794" width="1" height="42" fill="#0000ff"/>
<rect x="666" y="798" width="1" height="38" fill="#0000ff"/>
<rect x="673" y="808" width="1" height="28" fill="#0000ff"/>
<rect x="680" y="827" width="1" height="9" fill="#0000ff"/>
<rect x="689" y="828" width="1" height="8" fill="#0000ff"/>
<rect x="696" y="826" width="1" height="10" fill="#0000ff"/>
<rect x="703" y="830" width="1" height="6" fill="#0000ff"/>
<rect x="711" y="819" width="1" height="17" fill="#0000ff"/>
<rect x="718" y="827" width="1" height="9" fill="#0000ff"/>
<rect x="726" y="819" width="1" height="17" fill="#0000ff"/>
<rect x="733" y="823" width="1" height="13" fill="#0000ff"/>
<rect x="741" y="826" width="1" height="10" fill="#0000ff"/>
<rect x="748" y="828" width="1" height="8" fill="#0000ff"/>
<rect x="756" y="827" width="1" height="9" fill="#0000ff"/>
<rect x="764" y="824" width="1" height="12" fill="#0000ff"/>
<rect x="771" y="820" width="1" height="16" fill="#0000ff"/>
<rect x="778" y="814" width="1" height="22" fill="#0000ff"/>
<rect x="786" y="820" width="1" height="16" fill="#0000ff"/>
<rect x="794" y="807" width="1" height="29" fill="#0000ff"/>
<rect x="801" y="822" width="1" height="14" fill="#0000ff"/>
<rect x="808" y="820" width="1" height="16" fill="#0000ff"/>
<rect x="816" y="822" width="1" height="14" fill="#0000ff"/>
<rect x="824" y="824" width="1" height="12" fill="#0000ff"/>
<rect x="831" y="827" width="1" height="9" fill="#0000ff"/>
<rect x="839" y="820" width="1" height="16" fill="#0000ff"/>
<rect x="846" y="807" width="1" height="29" fill="#0000ff"/>
<rect x="854" y="816" width="1" height="20" fill="#0000ff"/>
<rect x="861" y="813" width="1" height="23" fill="#0000ff"/>
<rect x="869" y="808" width="1" height="28" fill="#0000ff"/>
<rect x="876" y="822" width="1" height="14" fill="#0000ff"/>
<rect x="884" y="826" width="1" height="10" fill="#0000ff"/>
<rect x="892" y="815" width="1" height="21" fill="#0000ff"/>
<rect x="899" y="818" width="1" height="18" fill="#0000ff"/>
<rect x="906" y="824" width="1" height="12" fill="#0000ff"/>
<rect x="914" y="825" width="1" height="11" fill="#0000ff"/>
<rect x="922" y="827" width="1" height="9" fill="#0000ff"/>
<rect x="929" y="826" width="1" height="10" fill="#0000ff"/>
<rect x="936" y="813" width="1" height="23" fill="#0000ff"/>
<rect x="944" y="831" width="1" height="5" fill="#0000ff"/>
<rect x="952" y="820" width="1" height="16" fill="#0000ff"/>
<rect x="959" y="820" width="1" height="16" fill="#0000ff"/>
<rect x="967" y="809" width="1" height="27" fill="#0000ff"/>
<rect x="974" y="820" width="1" height="16" fill="#0000ff"/>
<rect x="982" y="832" width="1" height="4" fill="#0000ff"/>
<rect x="989" y="828" width="1" height="8" fill="#0000ff"/>
<rect x="997" y="826" width="1" height="10" fill="#0000ff"/>
<rect x="1004" y="814" width="1" height="22" fill="#0000ff"/>
<rect x="1011" y="820" width="1" height="16" fill="#0000ff"/>
<rect x="1020" y="823" width="1" height="13" fill="#0000ff"/>
<rect x="1027" y="820" width="1" height="16" fill="#0000ff"/>
<rect x="1034" y="815" width="1" height="21" fill="#0000ff"/>
<rect x="1041" y="818" width="1" height="18" fill="#0000ff"/>
<rect x="1050" y="822" width="1" height="14" fill="#0000ff"/>
<rect x="1057" y="827" width="1" height="9" fill="#0000ff"/>
<rect x="1064" y="828" width="1" height="8" fill="#0000ff"/>
<rect x="1072" y="814" width="1" height="22" fill="#0000ff"/>
<rect x="1079" y="833" width="1" height="3" fill="#0000ff"/>
<rect x="1087" y="831" width="1" height="5" fill="#0000ff"/>
<rect x="1095" y="818" width="1" height="18" fill="#0000ff"/>
<rect x="1102" y="823" width="1" height="13" fill="#0000ff"/>
<rect x="1109" y="807" width="1" height="29" fill="#0000ff"/>
<rect x="1117" y="819" width="1" height="17" fill="#0000ff"/>
<rect x="1125" y="822" width="1" height="14" fill="#0000ff"/>
<rect x="1132" y="828" width="1" height="8" fill="#0000ff"/>
<rect x="1139" y="827" width="1" height="9" fill="#0000ff"/>
<rect x="1148" y="833" width="1" height="3" fill="#0000ff"/>
<rect x="0" y="743" width="1234" height="1" fill="#0000ff"/>
<rect x="0" y="820" width="1234" height="1" fill="#0000ff"/>
<polyline points="-1.5,754.5 0.5,754.5 5.5,757.5 12.5,760.5 20.5,764.5 27.5,768.5 35.5,774.5 42.5,780.5 50.5,787.5 57.5,794.5 64.5,799.5 72.5,804.5 80.5,810.5 87.5,814.5 95.5,817.5 102.5,819.5 109.5,820.5 117.5,820.5 124.5,819.5 132.5,816.5 140.5,811.5 148.5,805.5 155.5,799.5 163.5,793.5 170.5,790.5 177.5,786.5 185.5,783.5 192.5,777.5 200.5,771.5 207.5,768.5 215.5,764.5 222.5,762.5 230.5,758.5 237.5,755.5 245.5,752.5 252.5,748.5 260.5,746.5 268.5,745.5 275.5,746.5 280.5,747.5 290.5,752.5 298.5,755.5 305.5,760.5 312.5,765.5 320.5,770.5 327.5,775.5 335.5,782.5 342.5,786.5 350.5,790.5 357.5,791.5 365.5,793.5 372.5,795.5 380.5,795.5 387.5,797.5 395.5,798.5 403.5,800.5 410.5,800.5 417.5,800.5 425.5,801.5 432.5,803.5 440.5,805.5 447.5,806.5 455.5,807.5 462.5,807.5 470.5,807.5 478.5,807.5 485.5,807.5 493.5,808.5 500.5,809.5 508.5,810.5 515.5,810.5 523.5,809.5 530.5,809.5 538.5,811.5 545.5,813.5 553.5,815.5 561.5,817.5 568.5,818.5 575.5,818.5 583.5,818.5 590.5,817.5 598.5,815.5 605.5,814.5 613.5,809.5 620.5,803.5 628.5,796.5 636.5,789.5 640.5,787.5 647.5,782.5 655.5,777.5 662.5,771.5 670.5,765.5 677.5,760.5 685.5,756.5 692.5,752.5 700.5,749.5 707.5,748.5 715.5,746.5 722.5,744.5 730.5,743.5 737.5,743.5 745.5,744.5 752.5,745.5 760.5,746.5 767.5,748.5 775.5,750.5 782.5,753.5 790.5,755.5 797.5,757.5 805.5,757.5 812.5,757.5 820.5,757.5 827.5,756.5 835.5,755.5 842.5,753.5 850.5,750.5 857.5,748.5 865.5,747.5 872.5,747.5 880.5,749.5 887.5,751.5 895.5,755.5 902.5,760.5 910.5,767.5 917.5,773.5 925.5,782.5 932.5,789.5 940.5,796.5 947.5,801.5 955.5,804.5 960.5,806.5 967.5,808.5 974.5,808.5 982.5,807.5 989.5,804.5 997.5,798.5 1004.5,794.5 1012.5,787.5 1019.5,782.5 1027.5,778.5 1034.5,775.5 1042.5,773.5 1049.5,771.5 1057.5,770.5 1064.5,772.5 1072.5,773.5 1079.5,775.5 1087.5,778.5 1095.5,781.5 1102.5,782.5 1110.5,783.5 1117.5,783.5 1125.5,783.5 1132.5,784.5 1140.5,783.5 1148.5,783.5" fill="none" stroke="#000" stroke-width="1" stroke-dasharray="3 3"/>
<polyline points="-1.5,774.5 0.5,774.5 5.5,778.5 12.5,782.5 19.5,784.5 26.5,795.5 34.5,805.5 42.5,809.5 49.5,815.5 57.5,820.5 64.5,822.5 72.5,826.5 79.5,827.5 86.5,825.5 94.5,823.5 102.5,818.5 109.5,815.5 117.5,811.5 124.5,803.5 132.5,795.5 139.5,787.5 148.5,779.5 155.5,777.5 162.5,775.5 170.5,773.5 177.5,770.5 184.5,762.5 192.5,755.5 200.5,755.5 208.5,754.5 215.5,749.5 222.5,747.5 230.5,743.5 237.5,738.5 245.5,739.5 252.5,741.5 260.5,746.5 268.5,752.5 276.5,760.5 283.5,770.5 290.5,780.5 298.5,782.5 305.5,785.5 312.5,790.5 320.5,793.5 327.5,795.5 335.5,800.5 342.5,802.5 350.5,800.5 357.5,791.5 365.5,793.5 372.5,796.5 380.5,796.5 387.5,801.5 395.5,806.5 403.5,810.5 410.5,805.5 417.5,803.5 425.5,800.5 432.5,806.5 440.5,811.5 447.5,813.5 455.5,813.5 462.5,810.5 470.5,806.5 478.5,802.5 485.5,806.5 493.5,811.5 500.5,814.5 508.5,815.5 515.5,809.5 523.5,810.5 530.5,813.5 538.5,821.5 545.5,824.5 553.5,824.5 561.5,822.5 568.5,819.5 575.5,817.5 583.5,812.5 590.5,807.5 598.5,800.5 605.5,792.5 613.5,779.5 620.5,771.5 628.5,765.5 636.5,758.5 640.5,757.5 647.5,754.5 658.5,753.5 666.5,750.5 673.5,748.5 681.5,747.5 688.5,746.5 696.5,744.5 703.5,741.5 711.5,740.5 718.5,741.5 726.5,742.5 733.5,743.5 741.5,748.5 748.5,752.5 756.5,757.5 764.5,762.5 771.5,762.5 779.5,767.5 786.5,766.5 790.5,762.5 794.5,757.5 801.5,753.5 809.5,749.5 816.5,747.5 824.5,744.5 831.5,742.5 839.5,742.5 855.5,743.5 862.5,751.5 869.5,758.5 877.5,766.5 884.5,773.5 892.5,779.5 899.5,788.5 907.5,797.5 915.5,805.5 922.5,815.5 930.5,820.5 937.5,820.5 945.5,815.5 952.5,809.5 960.5,802.5 967.5,800.5 974.5,794.5 982.5,786.5 989.5,777.5 997.5,769.5 1004.5,765.5 1008.5,764.5 1012.5,759.5 1019.5,761.5 1027.5,768.5 1034.5,774.5 1042.5,777.5 1049.5,780.5 1057.5,783.5 1064.5,786.5 1072.5,786.5 1079.5,784.5 1087.5,783.5 1095.5,783.5 1102.5,779.5 1110.5,782.5 1117.5,781.5 1125.5,782.5 1132.5,785.5 1140.5,783.5 1146.5,783.5 1148.5,785.5" fill="none" stroke="#ff0000" stroke-width="1"/>
<rect x="1234" y="730" width="4" height="1" fill="#000"/>
<rect x="1234" y="735" width="4" height="1" fill="#000"/>
<rect x="1234" y="739" width="4" height="1" fill="#000"/>
<rect x="1234" y="743" width="4" height="1" fill="#000"/>
<rect x="1234" y="748" width="4" height="1" fill="#000"/>
<rect x="1234" y="752" width="8" height="1" fill="#000"/>
<rect x="1234" y="756" width="4" height="1" fill="#000"/>
<rect x="1234" y="761" width="4" height="1" fill="#000"/>
<rect x="1234" y="765" width="4" height="1" fill="#000"/>
<rect x="1234" y="769" width="4" height="1" fill="#000"/>
<rect x="1234" y="774" width="8" height="1" fill="#000"/>
<rect x="1234" y="778" width="4" height="1" fill="#000"/>
<rect x="1234" y="782" width="4" height="1" fill="#000"/>
<rect x="1234" y="787" width="4" height="1" fill="#000"/>
<rect x="1234" y="791" width="4" height="1" fill="#000"/>
<rect x="1234" y="795" width="8" height="1" fill="#000"/>
<rect x="1234" y="800" width="4" height="1" fill="#000"/>
<rect x="1234" y="804" width="4" height="1" fill="#000"/>
<rect x="1234" y="808" width="4" height="1" fill="#000"/>
<rect x="1234" y="813" width="4" height="1" fill="#000"/>
<rect x="1234" y="817" width="8" height="1" fill="#000"/>
<rect x="1234" y="821" width="4" height="1" fill="#000"/>
<rect x="1234" y="826" width="4" height="1" fill="#000"/>
<rect x="1234" y="830" width="4" height="1" fill="#000"/>
<rect x="1234" y="834" width="4" height="1" fill="#000"/>
<text transform="translate(1275.5 758) scale(1 1.09)" text-anchor="end" font-size="11" textLength="31" lengthAdjust="spacing">20000</text>
<text transform="translate(1275.5 780) scale(1 1.09)" text-anchor="end" font-size="11" textLength="31" lengthAdjust="spacing">15000</text>
<text transform="translate(1275.5 801) scale(1 1.09)" text-anchor="end" font-size="11" textLength="31" lengthAdjust="spacing">10000</text>
<text transform="translate(1275.5 823) scale(1 1.09)" text-anchor="end" font-size="11" textLength="24.5" lengthAdjust="spacing">5000</text>
<rect x="1234" y="825" width="28" height="1" fill="#000"/>
<rect x="1261" y="825" width="1" height="11" fill="#000"/>
<text transform="translate(1236 833.5) scale(1 1.09)" text-anchor="start" font-size="8" textLength="23" lengthAdjust="spacing">x1000</text>
<text transform="translate(-2.5 849) scale(1 1.09)" text-anchor="start" font-size="11">3</text>
<rect x="34" y="836" width="1" height="15" fill="#000"/>
<text transform="translate(34.5 849) scale(1 1.09)" text-anchor="start" font-size="11">10</text>
<rect x="72" y="836" width="1" height="15" fill="#000"/>
<text transform="translate(72.5 849) scale(1 1.09)" text-anchor="start" font-size="11">17</text>
<rect x="110" y="836" width="1" height="15" fill="#000"/>
<text transform="translate(110.5 849) scale(1 1.09)" text-anchor="start" font-size="11">24</text>
<rect x="148" y="836" width="1" height="15" fill="#000"/>
<text transform="translate(148.5 849) scale(1 1.09)" text-anchor="start" font-size="11">31</text>
<rect x="185" y="836" width="1" height="15" fill="#000"/>
<text transform="translate(185.5 849) scale(1 1.09)" text-anchor="start" font-size="11">7</text>
<rect x="222" y="836" width="1" height="15" fill="#000"/>
<text transform="translate(222.5 849) scale(1 1.09)" text-anchor="start" font-size="11">14</text>
<rect x="260" y="836" width="1" height="15" fill="#000"/>
<text transform="translate(260.5 849) scale(1 1.09)" text-anchor="start" font-size="11">21</text>
<rect x="298" y="836" width="1" height="15" fill="#000"/>
<text transform="translate(298.5 849) scale(1 1.09)" text-anchor="start" font-size="11">28</text>
<rect x="336" y="836" width="1" height="15" fill="#000"/>
<text transform="translate(336.5 849) scale(1 1.09)" text-anchor="start" font-size="11">5</text>
<rect x="372" y="836" width="1" height="15" fill="#000"/>
<text transform="translate(372.5 849) scale(1 1.09)" text-anchor="start" font-size="11">12</text>
<rect x="403" y="836" width="1" height="15" fill="#000"/>
<text transform="translate(403.5 849) scale(1 1.09)" text-anchor="start" font-size="11">19</text>
<rect x="441" y="836" width="1" height="15" fill="#000"/>
<text transform="translate(441.5 849) scale(1 1.09)" text-anchor="start" font-size="11">26</text>
<rect x="478" y="836" width="1" height="15" fill="#000"/>
<text transform="translate(478.5 849) scale(1 1.09)" text-anchor="start" font-size="11">2</text>
<rect x="508" y="836" width="1" height="15" fill="#000"/>
<text transform="translate(508.5 849) scale(1 1.09)" text-anchor="start" font-size="11">9</text>
<rect x="546" y="836" width="1" height="15" fill="#000"/>
<text transform="translate(546.5 849) scale(1 1.09)" text-anchor="start" font-size="11">16</text>
<rect x="576" y="836" width="1" height="15" fill="#000"/>
<text transform="translate(576.5 849) scale(1 1.09)" text-anchor="start" font-size="11">23</text>
<rect x="613" y="836" width="1" height="15" fill="#000"/>
<text transform="translate(613.5 849) scale(1 1.09)" text-anchor="start" font-size="11">30</text>
<rect x="650" y="836" width="1" height="15" fill="#000"/>
<text transform="translate(650.5 849) scale(1 1.09)" text-anchor="start" font-size="11">6</text>
<rect x="690" y="836" width="1" height="15" fill="#000"/>
<text transform="translate(690.5 849) scale(1 1.09)" text-anchor="start" font-size="11">13</text>
<rect x="719" y="836" width="1" height="15" fill="#000"/>
<text transform="translate(719.5 849) scale(1 1.09)" text-anchor="start" font-size="11">20</text>
<rect x="757" y="836" width="1" height="15" fill="#000"/>
<text transform="translate(757.5 849) scale(1 1.09)" text-anchor="start" font-size="11">27</text>
<rect x="794" y="836" width="1" height="15" fill="#000"/>
<text transform="translate(794.5 849) scale(1 1.09)" text-anchor="start" font-size="11">4</text>
<rect x="832" y="836" width="1" height="15" fill="#000"/>
<text transform="translate(832.5 849) scale(1 1.09)" text-anchor="start" font-size="11">11</text>
<rect x="869" y="836" width="1" height="15" fill="#000"/>
<text transform="translate(869.5 849) scale(1 1.09)" text-anchor="start" font-size="11">18</text>
<rect x="907" y="836" width="1" height="15" fill="#000"/>
<text transform="translate(907.5 849) scale(1 1.09)" text-anchor="start" font-size="11">25</text>
<rect x="944" y="836" width="1" height="15" fill="#000"/>
<text transform="translate(944.5 849) scale(1 1.09)" text-anchor="start" font-size="11">1</text>
<rect x="982" y="836" width="1" height="15" fill="#000"/>
<text transform="translate(982.5 849) scale(1 1.09)" text-anchor="start" font-size="11">8</text>
<rect x="1020" y="836" width="1" height="15" fill="#000"/>
<text transform="translate(1020.5 849) scale(1 1.09)" text-anchor="start" font-size="11">15</text>
<rect x="1058" y="836" width="1" height="15" fill="#000"/>
<text transform="translate(1058.5 849) scale(1 1.09)" text-anchor="start" font-size="11">22</text>
<rect x="1096" y="836" width="1" height="15" fill="#000"/>
<text transform="translate(1096.5 849) scale(1 1.09)" text-anchor="start" font-size="11">29</text>
<rect x="1132" y="836" width="1" height="15" fill="#000"/>
<text transform="translate(1132.5 849) scale(1 1.09)" text-anchor="start" font-size="11">6</text>
<rect x="1170" y="836" width="1" height="15" fill="#000"/>
<text transform="translate(1170.5 849) scale(1 1.09)" text-anchor="start" font-size="11">13</text>
<rect x="1208" y="836" width="1" height="15" fill="#000"/>
<text transform="translate(1208.5 849) scale(1 1.09)" text-anchor="start" font-size="11">20</text>
<text transform="translate(-3.3 864) scale(1 1.09)" text-anchor="start" font-size="11">May</text>
<rect x="154" y="836" width="1" height="30" fill="#000"/>
<text transform="translate(154.5 864) scale(1 1.09)" text-anchor="start" font-size="11">June</text>
<rect x="320" y="836" width="1" height="30" fill="#000"/>
<text transform="translate(320.5 864) scale(1 1.09)" text-anchor="start" font-size="11">July</text>
<rect x="478" y="836" width="1" height="30" fill="#000"/>
<text transform="translate(478.5 864) scale(1 1.09)" text-anchor="start" font-size="11">August</text>
<rect x="629" y="836" width="1" height="30" fill="#000"/>
<text transform="translate(629.5 864) scale(1 1.09)" text-anchor="start" font-size="11">September</text>
<rect x="786" y="836" width="1" height="30" fill="#000"/>
<text transform="translate(786.5 864) scale(1 1.09)" text-anchor="start" font-size="11">October</text>
<rect x="944" y="836" width="1" height="30" fill="#000"/>
<text transform="translate(944.5 864) scale(1 1.09)" text-anchor="start" font-size="11">November</text>
<rect x="1110" y="836" width="1" height="30" fill="#000"/>
<text transform="translate(1110.5 864) scale(1 1.09)" text-anchor="start" font-size="11">December</text>
<text transform="translate(367 15) scale(1 1.09)" text-anchor="start" font-size="11" textLength="500" lengthAdjust="spacing">Directnl Movement -DI (23.0000), Directnl Movement +DI (21.0000), Directnl Movement ADX (14.0000)</text>
<text transform="translate(534 78) scale(1 1.09)" text-anchor="start" font-size="11" textLength="164" lengthAdjust="spacing">Relative Strength Index(51.7316)</text>
<text transform="translate(573 135) scale(1 1.09)" text-anchor="start" font-size="11" textLength="87" lengthAdjust="spacing">MACD (-0.01662)</text>
<text transform="translate(354 185) scale(1 1.09)" text-anchor="start" font-size="11" textLength="524" lengthAdjust="spacing">PT (8.83000, 8.96000, 8.83000, 8.94000, +0.0000), Parabolic SAR (9.01214), Trailing Stop Long (8.82069)</text>
<text transform="translate(488 744) scale(1 1.09)" text-anchor="start" font-size="11" textLength="257" lengthAdjust="spacing">Volume (1,334,318), Stochastic Oscillator (48.5914)</text>
</svg>
</body></html>
